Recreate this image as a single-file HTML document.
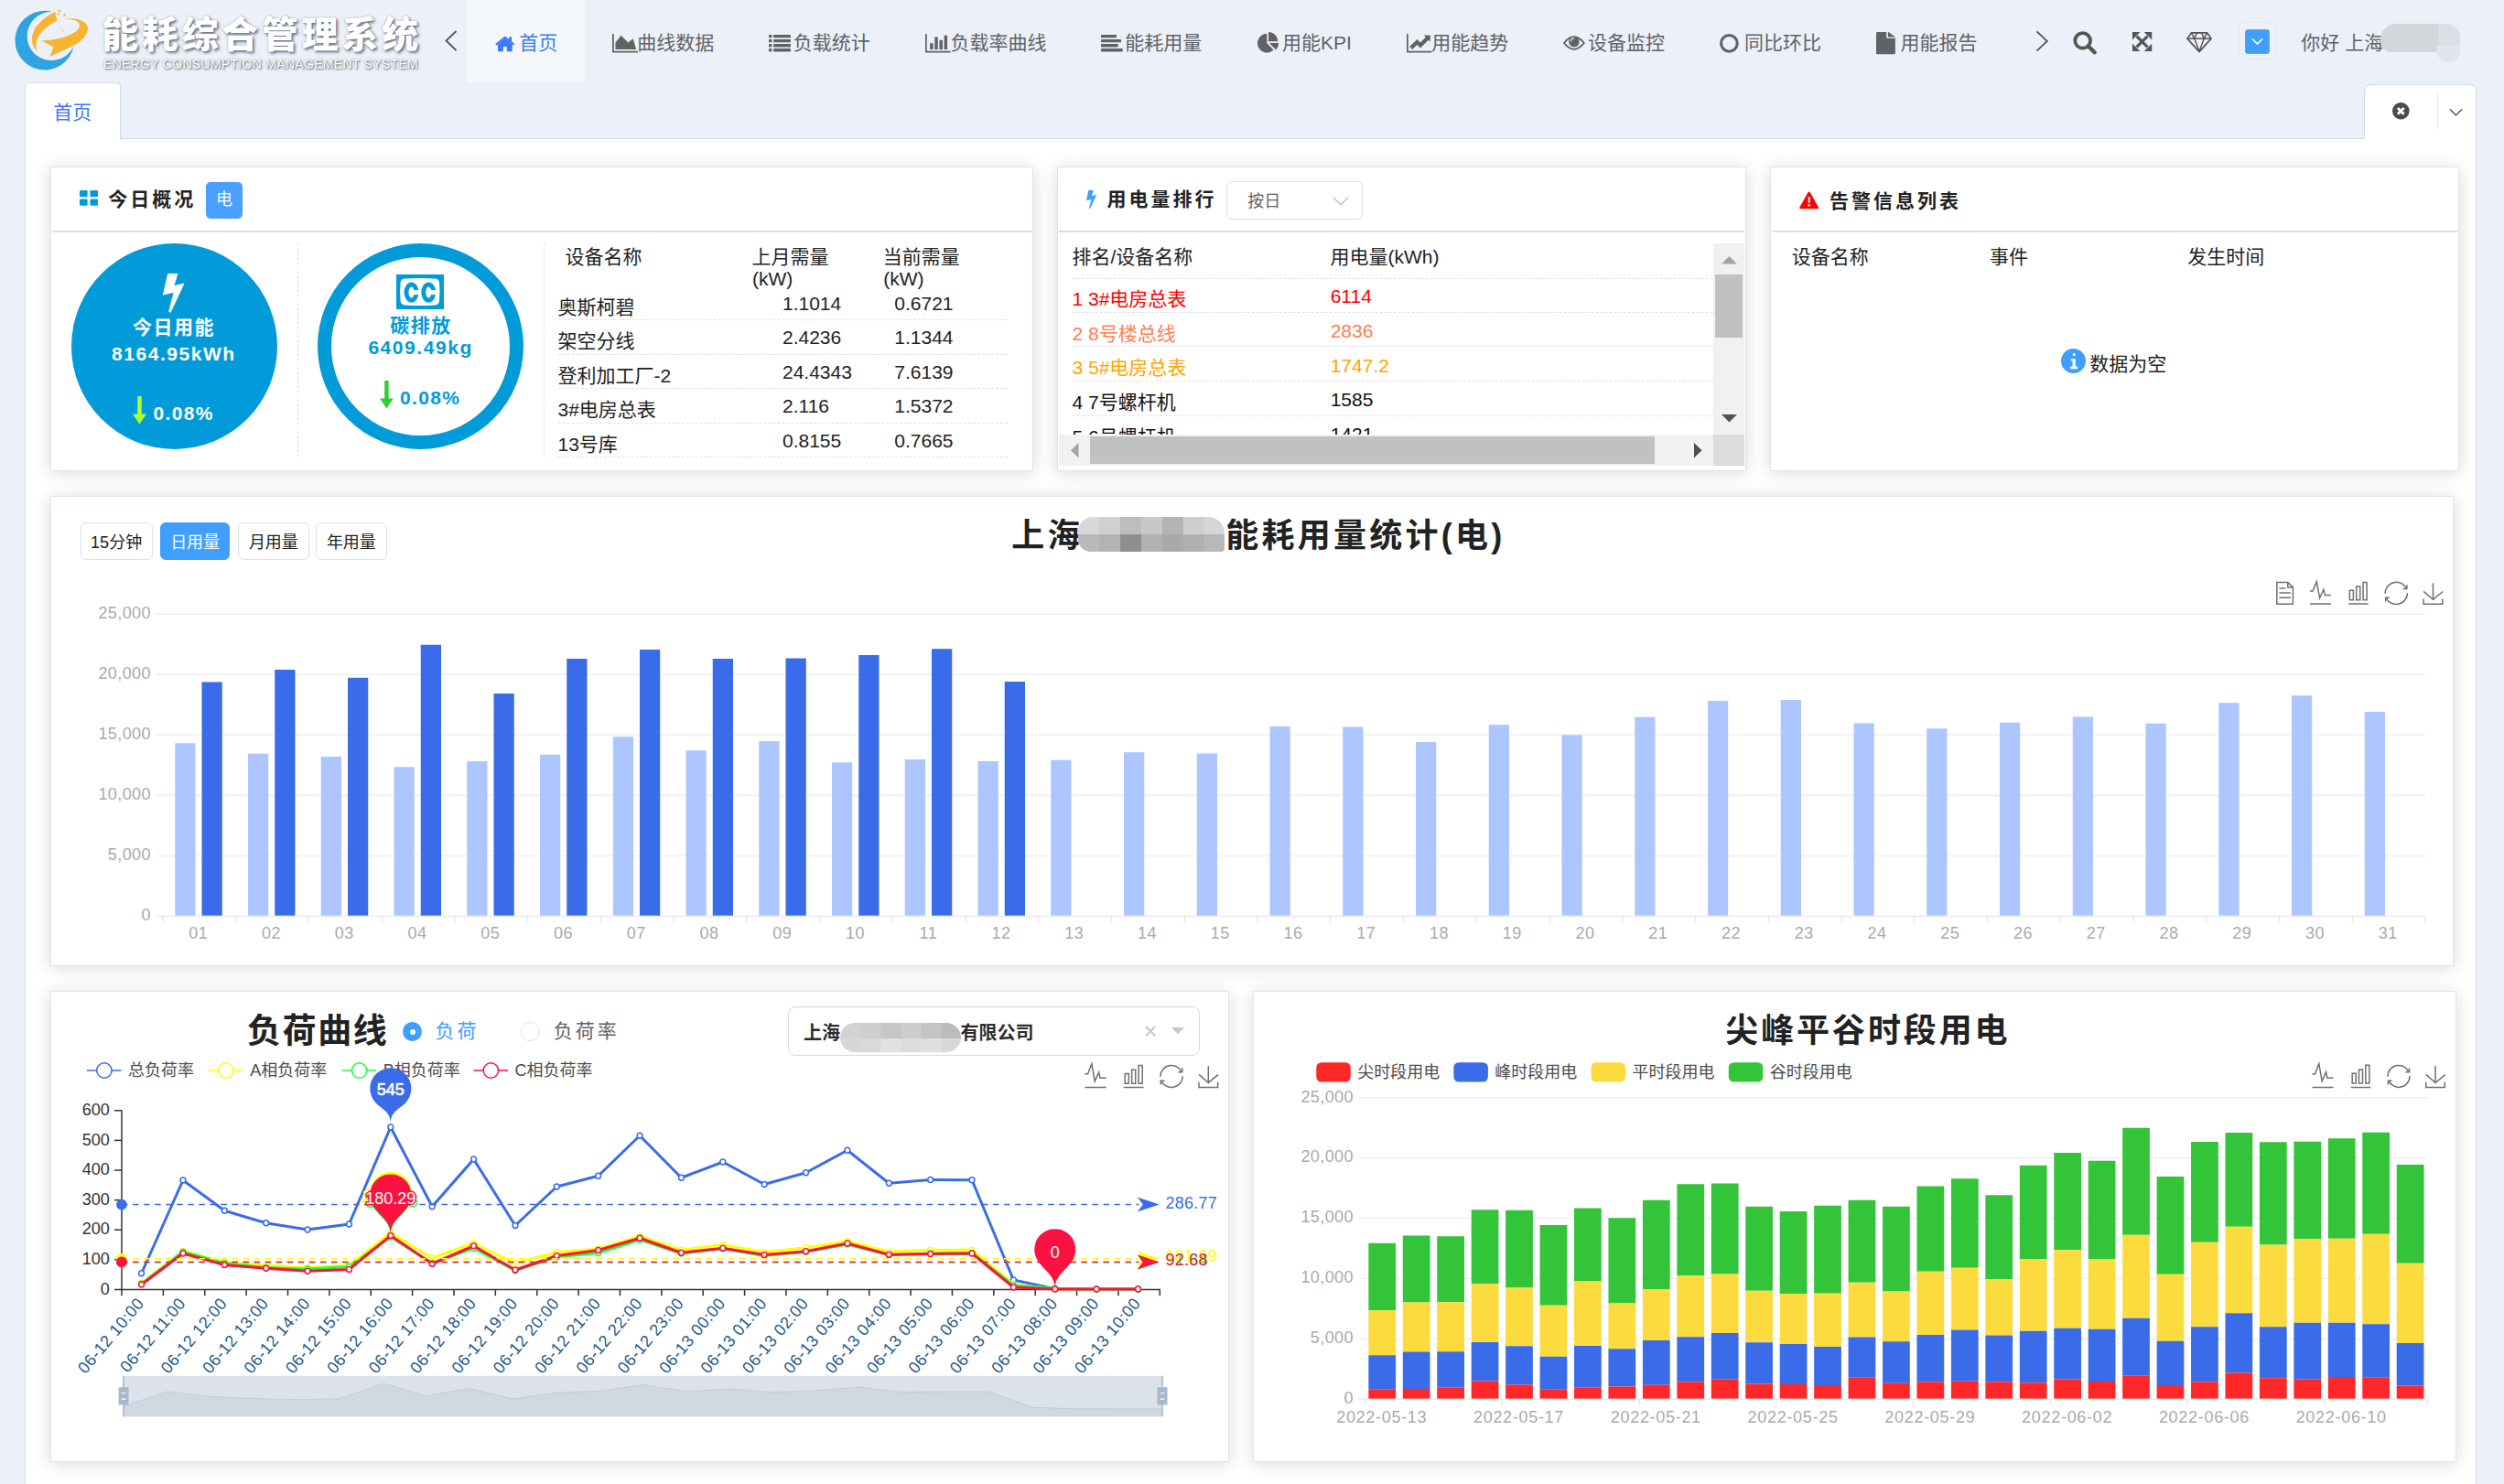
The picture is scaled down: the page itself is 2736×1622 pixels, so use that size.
<!DOCTYPE html>
<html lang="zh-CN"><head><meta charset="utf-8"><title>能耗综合管理系统</title>
<style>
*{box-sizing:border-box}
html,body{margin:0;padding:0}
body{width:2736px;height:1622px;overflow:hidden;position:relative;background:#ecf0f8;font-family:"Liberation Sans","Noto Sans CJK SC",sans-serif;color:#222;-webkit-font-smoothing:antialiased}
.abs{position:absolute}
.t{position:absolute;white-space:nowrap;line-height:1}
.panel{position:absolute;background:#fff;border:1px solid #dfe3ee;box-shadow:0 2px 18px rgba(0,0,0,.15)}
.phead{position:absolute;left:1px;right:1px;height:2px;background:#d9dfec}
.ptitle{font-weight:700;font-size:21px;letter-spacing:3px;color:#222}
.btn{position:absolute;height:41px;top:571px;border:1px solid #dcdfe6;border-radius:6px;background:#fff;font-size:18px;line-height:42px;text-align:center;color:#222}
.btn.on{background:#409eff;border-color:#409eff;color:#fff}
.row{position:absolute;border-bottom:1.5px dashed #e2e2e2}
svg{position:absolute;overflow:visible}
svg text{font-family:"Liberation Sans","Noto Sans CJK SC",sans-serif}
</style></head>
<body>
<!-- header -->
<svg style="left:8px;top:4px" width="100" height="80" viewBox="0 0 1855 1484"><path d="M900 163 A600 600 0 1 0 1345 862 A494 494 0 1 1 900 163 Z" fill="#2ea4e3"/><path d="M955 172 C 760 270 580 420 520 600 C 480 730 500 860 600 975 C 560 800 600 680 700 570 C 790 470 900 400 1015 340 Z" fill="#f8b332"/><path d="M1140 318 C 1300 280 1560 300 1630 470 C 1660 600 1500 780 1330 860 L 870 1070 L 930 880 L 690 745 C 900 760 1180 690 1340 600 C 1480 520 1500 410 1400 350 C 1320 310 1230 310 1140 318 Z" fill="#f8b332"/><circle cx="1058" cy="150" r="24" fill="#f8b332"/><circle cx="1036" cy="212" r="22" fill="#f8b332"/><circle cx="1160" cy="232" r="24" fill="#f8b332"/><circle cx="968" cy="188" r="16" fill="#f8b332"/><path d="M1075 490 L1150 580" stroke="#f8b332" stroke-width="14" stroke-linecap="round" opacity=".8"/></svg>
<div class="t " style="left:111.00px;top:14.36px;font-size:40px;line-height:48.0px;color:#fff;font-weight:900;letter-spacing:3.7px;text-shadow:2px 2px 3px rgba(70,80,100,.75),0 0 2px rgba(90,100,120,.55)">能耗综合管理系统</div>
<div class="t " style="left:113.00px;top:62.28px;font-size:14px;line-height:16.8px;color:#fff;font-weight:400;letter-spacing:0.3px;text-shadow:1px 1px 2px rgba(70,80,100,.85),0 0 2px rgba(90,100,120,.6)">ENERGY CONSUMPTION MANAGEMENT SYSTEM</div>
<svg style="left:485.00px;top:32.00px" width="16.00" height="25.00" viewBox="0 0 16 25" preserveAspectRatio="none"><path d="M13.5 2 L2.5 12.5 L13.5 23" fill="none" stroke="#555" stroke-width="1.8"/></svg>
<div class="abs" style="left:510px;top:0;width:129px;height:89.5px;background:#f4f7fb"></div>
<svg style="left:540.50px;top:38.60px" width="21.70" height="17.20" viewBox="0 0 28 22" preserveAspectRatio="none"><path d="M14 3.6 L24.2 12 V21.3 Q24.2 22 23.5 22 H16.6 V15.4 H11.4 V22 H4.5 Q3.8 22 3.8 21.3 V12 Z" fill="#3a7afe"/><path d="M0.4 11.6 L14 0.5 L19.6 5.1 V1.6 H23.4 V8.2 L27.6 11.6 L26 13.5 L14 3.7 L2 13.5 Z" fill="#3a7afe"/></svg>
<div class="t " style="left:567.20px;top:34.12px;font-size:21px;line-height:25.2px;color:#3a7afe;font-weight:400;">首页</div>
<svg style="left:668.70px;top:37.30px" width="27.90" height="20.50" viewBox="0 0 2048 1536" preserveAspectRatio="none"><path d="M0 0 H128 V1408 H2048 V1536 H0 Z" fill="#606266"/><path d="M1664 384 L1920 1280 H256 V704 L704 128 L1280 704 Z" fill="#606266"/></svg>
<div class="t " style="left:696.30px;top:34.12px;font-size:21px;line-height:25.2px;color:#606266;font-weight:400;">曲线数据</div>
<svg style="left:840.00px;top:37.60px" width="24.00" height="18.40" viewBox="0 0 1792 1408" preserveAspectRatio="none"><rect x="0" y="0" width="256" height="256" rx="32" fill="#606266"/><rect x="384" y="0" width="1408" height="256" rx="32" fill="#606266"/><rect x="0" y="384" width="256" height="256" rx="32" fill="#606266"/><rect x="384" y="384" width="1408" height="256" rx="32" fill="#606266"/><rect x="0" y="768" width="256" height="256" rx="32" fill="#606266"/><rect x="384" y="768" width="1408" height="256" rx="32" fill="#606266"/><rect x="0" y="1152" width="256" height="256" rx="32" fill="#606266"/><rect x="384" y="1152" width="1408" height="256" rx="32" fill="#606266"/></svg>
<div class="t " style="left:866.80px;top:34.12px;font-size:21px;line-height:25.2px;color:#606266;font-weight:400;">负载统计</div>
<svg style="left:1010.50px;top:37.30px" width="27.50" height="20.50" viewBox="0 0 2048 1536" preserveAspectRatio="none"><path d="M0 0 H128 V1408 H2048 V1536 H0 Z" fill="#606266"/><rect x="384" y="768" width="256" height="512" fill="#606266"/><rect x="768" y="256" width="256" height="1024" fill="#606266"/><rect x="1152" y="512" width="256" height="768" fill="#606266"/><rect x="1536" y="128" width="256" height="1152" fill="#606266"/></svg>
<div class="t " style="left:1038.50px;top:34.12px;font-size:21px;line-height:25.2px;color:#606266;font-weight:400;">负载率曲线</div>
<svg style="left:1203.00px;top:37.60px" width="23.80" height="18.40" viewBox="0 0 1792 1408" preserveAspectRatio="none"><rect x="0" y="0" width="1280" height="256" rx="64" fill="#606266"/><rect x="0" y="384" width="1664" height="256" rx="64" fill="#606266"/><rect x="0" y="768" width="1408" height="256" rx="64" fill="#606266"/><rect x="0" y="1152" width="1792" height="256" rx="64" fill="#606266"/></svg>
<div class="t " style="left:1229.20px;top:34.12px;font-size:21px;line-height:25.2px;color:#606266;font-weight:400;">能耗用量</div>
<svg style="left:1373.75px;top:34.60px" width="23.20" height="22.60" viewBox="0 0 1620 1570" preserveAspectRatio="none"><path d="M720 130 A720 720 0 1 0 1229 1360 L720 850 Z" fill="#606266"/><path d="M840 0 A720 720 0 0 1 1560 720 H840 Z" fill="#606266"/><path d="M900 840 H1620 A720 720 0 0 1 1409 1349 Z" fill="#606266"/></svg>
<div class="t " style="left:1401.00px;top:34.12px;font-size:21px;line-height:25.2px;color:#606266;font-weight:400;">用能KPI</div>
<svg style="left:1536.75px;top:37.30px" width="27.50" height="20.50" viewBox="0 0 2048 1536" preserveAspectRatio="none"><path d="M0 0 H128 V1408 H2048 V1536 H0 Z" fill="#606266"/><path d="M1920 150 V650 L1770 500 L1110 1160 L840 890 L458 1272 L236 1050 L840 446 L1110 716 L1548 278 L1398 108 H1868 Q1920 108 1920 150 Z" fill="#606266"/></svg>
<div class="t " style="left:1564.30px;top:34.12px;font-size:21px;line-height:25.2px;color:#606266;font-weight:400;">用能趋势</div>
<svg style="left:1708.00px;top:35.20px" width="23.80" height="24.00" viewBox="0 0 100 100" preserveAspectRatio="none"><path d="M4 50 Q50 -6 96 50 Q50 106 4 50 Z" fill="none" stroke="#606266" stroke-width="8" stroke-linejoin="round"/><circle cx="50" cy="44" r="24" fill="#606266"/><path d="M36 42 A14 14 0 0 1 50 28" fill="none" stroke="#ecf0f8" stroke-width="5" stroke-linecap="round"/></svg>
<div class="t " style="left:1735.00px;top:34.12px;font-size:21px;line-height:25.2px;color:#606266;font-weight:400;">设备监控</div>
<svg style="left:1878.75px;top:37.00px" width="20.80" height="20.80" viewBox="0 0 100 100" preserveAspectRatio="none"><circle cx="50" cy="50" r="42.5" fill="none" stroke="#606266" stroke-width="15"/></svg>
<div class="t " style="left:1906.00px;top:34.12px;font-size:21px;line-height:25.2px;color:#606266;font-weight:400;">同比环比</div>
<svg style="left:2050.00px;top:35.00px" width="20.90" height="24.30" viewBox="0 0 100 128" preserveAspectRatio="none"><path d="M6 0 H54 V30 Q54 36 60 36 H100 V122 Q100 128 94 128 H6 Q0 128 0 122 V6 Q0 0 6 0 Z" fill="#606266"/><path d="M62 0 Q66 1 70 5 L95 30 Q99 34 100 28 L100 28 H62 Z" fill="#606266"/><path d="M62 0 L100 28 H62 Z" fill="#606266"/></svg>
<div class="t " style="left:2076.40px;top:34.12px;font-size:21px;line-height:25.2px;color:#606266;font-weight:400;">用能报告</div>
<svg style="left:2223.00px;top:32.00px" width="16.00" height="26.00" viewBox="0 0 16 26" preserveAspectRatio="none"><path d="M2.5 2.3 L13.8 13 L2.5 23.7" fill="none" stroke="#555" stroke-width="1.8"/></svg>
<svg style="left:2265.40px;top:33.70px" width="25.40" height="24.90" viewBox="0 0 100 100" preserveAspectRatio="none"><circle cx="42" cy="42" r="33" fill="none" stroke="#555" stroke-width="15"/><path d="M66 66 L93 93" stroke="#555" stroke-width="17" stroke-linecap="round"/></svg>
<svg style="left:2329.70px;top:34.90px" width="21.20" height="21.10" viewBox="0 0 100 100" preserveAspectRatio="none"><path d="M22 22 L78 78 M78 22 L22 78" stroke="#555" stroke-width="15"/><path d="M0 0 H40 L0 40 Z M100 0 V40 L60 0 Z M0 100 V60 L40 100 Z M100 100 H60 L100 60 Z" fill="#555"/></svg>
<svg style="left:2388.90px;top:34.60px" width="28.00" height="22.50" viewBox="0 0 128 100" preserveAspectRatio="none"><path d="M24 4 H104 L124 32 L64 96 L4 32 Z" fill="none" stroke="#555" stroke-width="7.5" stroke-linejoin="round"/><path d="M4 32 H124 M40 32 L64 94 L88 32 M24 4 L40 32 L52 4 M76 4 L88 32 L104 4 M52 4 L64 4" fill="none" stroke="#555" stroke-width="6.5" stroke-linejoin="round"/></svg>
<div class="abs" style="left:2445.5px;top:24.3px;width:41.2px;height:41px;border:1px solid #e3e7ef;border-radius:6px;background:#eef1f8"></div>
<div class="abs" style="left:2453px;top:32px;width:27px;height:27px;background:#409eff;border:1px solid #8a9bb5;border-radius:3px"></div>
<svg style="left:2459.00px;top:41.00px" width="15.00" height="9.00" viewBox="0 0 15 9" preserveAspectRatio="none"><path d="M2 1.5 L7.5 7 L13 1.5" fill="none" stroke="#fff" stroke-width="1.6"/></svg>
<div class="t " style="left:2514.30px;top:34.12px;font-size:21px;line-height:25.2px;color:#606266;font-weight:400;">你好 上海</div>
<div class="abs" style="left:2600.5px;top:25.7px;width:87.2px;height:31.8px;border-radius:17px 15px 0 12px;background:linear-gradient(90deg,#d3d6da 0%,#d3d6da 72%,#dcdfe5 73%,#dcdfe5 100%)"></div>
<div class="abs" style="left:2662px;top:50px;width:25.7px;height:18px;border-radius:0 0 13px 15px;background:#e1e4ea"></div>
<!-- tabs + content -->
<div class="abs" style="left:27px;top:151px;width:2679px;height:1480px;background:#fff;border:1px solid #d3dae8;border-bottom:none"></div>
<div class="abs" style="left:27px;top:90px;width:104.5px;height:62.5px;background:#fff;border:1px solid #d3dae8;border-bottom:none;border-radius:5px 5px 0 0"></div>
<div class="t " style="left:58.20px;top:110.02px;font-size:21px;line-height:25.2px;color:#3f79fb;font-weight:400;">首页</div>
<div class="abs" style="left:2583px;top:92px;width:123px;height:59.5px;background:#fff;border:1px solid #d3dae8;border-bottom:none;border-radius:7px 7px 0 0"></div>
<svg style="left:2614.20px;top:112.30px" width="18.60" height="18.60" viewBox="0 0 100 100" preserveAspectRatio="none"><circle cx="50" cy="50" r="50" fill="#4a4a4a"/><path d="M32 32 L68 68 M68 32 L32 68" stroke="#fff" stroke-width="15"/></svg>
<div class="abs" style="left:2663px;top:101px;width:1px;height:41.5px;background:#e4e7ed"></div>
<svg style="left:2676.00px;top:117.50px" width="15.00" height="10.00" viewBox="0 0 15 10" preserveAspectRatio="none"><path d="M1 1.5 L7.5 8 L14 1.5" fill="none" stroke="#555" stroke-width="1.4"/></svg>
<!-- row 1 -->
<div class="panel" style="left:55px;top:182px;width:1074px;height:333px"></div>
<div class="abs" style="left:57px;top:251.5px;width:1070px;height:2px;background:#d9dfec"></div>
<svg style="left:86.50px;top:208.20px" width="20.00" height="16.80" viewBox="0 0 20 16.8" preserveAspectRatio="none"><rect x="0" y="0" width="8.6" height="7.2" rx="1.3" fill="#029bd9"/><rect x="0" y="9.6" width="8.6" height="7.2" rx="1.3" fill="#029bd9"/><rect x="11.4" y="0" width="8.6" height="7.2" rx="1.3" fill="#029bd9"/><rect x="11.4" y="9.6" width="8.6" height="7.2" rx="1.3" fill="#029bd9"/></svg>
<div class="t " style="left:118.30px;top:205.42px;font-size:21px;line-height:25.2px;color:#222;font-weight:700;letter-spacing:3px">今日概况</div>
<div class="abs" style="left:225px;top:199px;width:40px;height:40px;background:#4a9fff;border-radius:5px"></div>
<div class="t " style="left:236.00px;top:208.25px;font-size:18px;line-height:21.6px;color:#fff;font-weight:400;">电</div>
<div class="abs" style="left:78px;top:265.75px;width:225px;height:225px;border-radius:50%;background:#029bd9"></div>
<svg style="left:178.30px;top:299.20px" width="23.30" height="42.70" viewBox="0 0 288 528" preserveAspectRatio="none"><path d="M68 3 L198 3 L148 168 L285 135 L103 525 L81 513 L148 253 L3 288 Z" fill="#fff" stroke="#fff" stroke-width="8" stroke-linejoin="round"/></svg>
<div class="t " style="left:145.00px;top:345.12px;font-size:21px;line-height:25.2px;color:#fff;font-weight:700;letter-spacing:1.5px">今日用能</div>
<div class="t " style="left:122.00px;top:374.32px;font-size:21px;line-height:25.2px;color:#fff;font-weight:700;letter-spacing:1.55px">8164.95kWh</div>
<svg style="left:145.00px;top:432.50px" width="15.00" height="30.50" viewBox="0 0 60 122" preserveAspectRatio="none"><path d="M21 0 H39 V78 H60 L30 122 L0 78 H21 Z" fill="#adff2f"/></svg>
<div class="t " style="left:167.50px;top:439.12px;font-size:21px;line-height:25.2px;color:#fff;font-weight:700;letter-spacing:1.35px">0.08%</div>
<div class="abs" style="left:325px;top:266px;width:0;height:233px;border-left:1.5px dashed #e0e0e0"></div>
<div class="abs" style="left:594px;top:266px;width:0;height:233px;border-left:1.5px dashed #e0e0e0"></div>
<div class="abs" style="left:347px;top:265.75px;width:225px;height:225px;border-radius:50%;border:15px solid #029bd9;background:#fff"></div>
<div class="abs" style="left:433.3px;top:299.7px;width:51.6px;height:38.2px;background:#029bd9"></div>
<svg style="left:433.30px;top:299.70px" width="51.60" height="38.20" viewBox="0 0 51.6 38.2" preserveAspectRatio="none"><path d="M9 4.6 Q25.8 3.2 42.6 4.6 Q46.6 5 47 9 Q48 19 47 29 Q46.6 33 42.6 33.4 Q25.8 34.8 9 33.4 Q5 33 4.6 29 Q3.6 19 4.6 9 Q5 5 9 4.6 Z" fill="#fff"/><ellipse cx="16.55" cy="19.6" rx="5.55" ry="8.6" fill="none" stroke="#029bd9" stroke-width="4.9"/><rect x="18.05" y="17.1" width="8" height="5" fill="#fff"/><ellipse cx="35.30" cy="19.6" rx="5.55" ry="8.6" fill="none" stroke="#029bd9" stroke-width="4.9"/><rect x="36.80" y="17.1" width="8" height="5" fill="#fff"/></svg>
<div class="t " style="left:426.30px;top:343.42px;font-size:21px;line-height:25.2px;color:#029bd9;font-weight:700;letter-spacing:1.5px">碳排放</div>
<div class="t " style="left:402.40px;top:366.72px;font-size:21px;line-height:25.2px;color:#029bd9;font-weight:700;letter-spacing:1.55px">6409.49kg</div>
<svg style="left:414.50px;top:415.75px" width="14.80" height="30.50" viewBox="0 0 60 122" preserveAspectRatio="none"><path d="M21 0 H39 V78 H60 L30 122 L0 78 H21 Z" fill="#32cd32"/></svg>
<div class="t " style="left:437.00px;top:422.12px;font-size:21px;line-height:25.2px;color:#029bd9;font-weight:700;letter-spacing:1.35px">0.08%</div>
<div class="t " style="left:617.50px;top:268.42px;font-size:21px;line-height:25.2px;color:#222;font-weight:400;">设备名称</div>
<div class="t " style="left:821.50px;top:268.42px;font-size:21px;line-height:25.2px;color:#222;font-weight:400;">上月需量</div>
<div class="t " style="left:822.00px;top:292.12px;font-size:21px;line-height:25.2px;color:#222;font-weight:400;">(kW)</div>
<div class="t " style="left:964.80px;top:268.42px;font-size:21px;line-height:25.2px;color:#222;font-weight:400;">当前需量</div>
<div class="t " style="left:965.30px;top:292.12px;font-size:21px;line-height:25.2px;color:#222;font-weight:400;">(kW)</div>
<div class="abs" style="left:610px;top:349.25px;width:491px;height:0;border-top:1.5px dashed #e0e0e0"></div>
<div class="t " style="left:609.50px;top:322.52px;font-size:21px;line-height:25.2px;color:#222;font-weight:400;">奥斯柯碧</div>
<div class="t " style="left:855.00px;top:318.82px;font-size:21px;line-height:25.2px;color:#222;font-weight:400;">1.1014</div>
<div class="t " style="left:977.30px;top:318.82px;font-size:21px;line-height:25.2px;color:#222;font-weight:400;">0.6721</div>
<div class="abs" style="left:610px;top:386.75px;width:491px;height:0;border-top:1.5px dashed #e0e0e0"></div>
<div class="t " style="left:609.50px;top:360.02px;font-size:21px;line-height:25.2px;color:#222;font-weight:400;">架空分线</div>
<div class="t " style="left:855.00px;top:356.32px;font-size:21px;line-height:25.2px;color:#222;font-weight:400;">2.4236</div>
<div class="t " style="left:977.30px;top:356.32px;font-size:21px;line-height:25.2px;color:#222;font-weight:400;">1.1344</div>
<div class="abs" style="left:610px;top:424.25px;width:491px;height:0;border-top:1.5px dashed #e0e0e0"></div>
<div class="t " style="left:609.50px;top:397.52px;font-size:21px;line-height:25.2px;color:#222;font-weight:400;">登利加工厂-2</div>
<div class="t " style="left:855.00px;top:393.82px;font-size:21px;line-height:25.2px;color:#222;font-weight:400;">24.4343</div>
<div class="t " style="left:977.30px;top:393.82px;font-size:21px;line-height:25.2px;color:#222;font-weight:400;">7.6139</div>
<div class="abs" style="left:610px;top:461.75px;width:491px;height:0;border-top:1.5px dashed #e0e0e0"></div>
<div class="t " style="left:609.50px;top:435.02px;font-size:21px;line-height:25.2px;color:#222;font-weight:400;">3#电房总表</div>
<div class="t " style="left:855.00px;top:431.32px;font-size:21px;line-height:25.2px;color:#222;font-weight:400;">2.116</div>
<div class="t " style="left:977.30px;top:431.32px;font-size:21px;line-height:25.2px;color:#222;font-weight:400;">1.5372</div>
<div class="abs" style="left:610px;top:499.25px;width:491px;height:0;border-top:1.5px dashed #e0e0e0"></div>
<div class="t " style="left:609.50px;top:472.52px;font-size:21px;line-height:25.2px;color:#222;font-weight:400;">13号库</div>
<div class="t " style="left:855.00px;top:468.82px;font-size:21px;line-height:25.2px;color:#222;font-weight:400;">0.8155</div>
<div class="t " style="left:977.30px;top:468.82px;font-size:21px;line-height:25.2px;color:#222;font-weight:400;">0.7665</div>
<div class="panel" style="left:1155px;top:182px;width:753px;height:333px"></div>
<div class="abs" style="left:1157px;top:251.5px;width:749px;height:2px;background:#d9dfec"></div>
<svg style="left:1186.70px;top:207.90px" width="11.00" height="20.20" viewBox="0 0 288 528" preserveAspectRatio="none"><path d="M68 3 L198 3 L148 168 L285 135 L103 525 L81 513 L148 253 L3 288 Z" fill="#409eff" stroke="#409eff" stroke-width="10" stroke-linejoin="round"/></svg>
<div class="t " style="left:1209.50px;top:204.92px;font-size:21px;line-height:25.2px;color:#222;font-weight:700;letter-spacing:3px">用电量排行</div>
<div class="abs" style="left:1339.5px;top:198.25px;width:149.5px;height:41.5px;border:1px solid #dcdfe6;border-radius:6px;background:#fff"></div>
<div class="t " style="left:1363.30px;top:209.75px;font-size:18px;line-height:21.6px;color:#606266;font-weight:400;">按日</div>
<svg style="left:1455.50px;top:214.50px" width="18.00" height="10.00" viewBox="0 0 18 10" preserveAspectRatio="none"><path d="M1 1 L9 8.8 L17 1" fill="none" stroke="#c0c4cc" stroke-width="1.6"/></svg>
<div class="t " style="left:1171.50px;top:268.22px;font-size:21px;line-height:25.2px;color:#222;font-weight:400;">排名/设备名称</div>
<div class="t " style="left:1453.50px;top:268.22px;font-size:21px;line-height:25.2px;color:#222;font-weight:400;">用电量(kWh)</div>
<div class="abs" style="left:1157px;top:265px;width:715px;height:210px;overflow:hidden"><div class="abs" style="left:15px;top:38.75px;width:700px;height:0;border-top:1.5px dashed #e0e0e0"></div><div class="abs" style="left:15px;top:75.75px;width:700px;height:0;border-top:1.5px dashed #e0e0e0"></div><div class="t " style="left:14.50px;top:49.22px;font-size:21px;line-height:25.2px;color:#ff0000;font-weight:400;">1 3#电房总表</div><div class="t " style="left:296.70px;top:46.32px;font-size:21px;line-height:25.2px;color:#ff0000;font-weight:400;">6114</div><div class="abs" style="left:15px;top:113.35000000000002px;width:700px;height:0;border-top:1.5px dashed #e0e0e0"></div><div class="t " style="left:14.50px;top:86.82px;font-size:21px;line-height:25.2px;color:#ff7f50;font-weight:400;">2 8号楼总线</div><div class="t " style="left:296.70px;top:83.92px;font-size:21px;line-height:25.2px;color:#ff7f50;font-weight:400;">2836</div><div class="abs" style="left:15px;top:150.95px;width:700px;height:0;border-top:1.5px dashed #e0e0e0"></div><div class="t " style="left:14.50px;top:124.42px;font-size:21px;line-height:25.2px;color:#ffa500;font-weight:400;">3 5#电房总表</div><div class="t " style="left:296.70px;top:121.52px;font-size:21px;line-height:25.2px;color:#ffa500;font-weight:400;">1747.2</div><div class="abs" style="left:15px;top:188.55px;width:700px;height:0;border-top:1.5px dashed #e0e0e0"></div><div class="t " style="left:14.50px;top:162.02px;font-size:21px;line-height:25.2px;color:#111;font-weight:400;">4 7号螺杆机</div><div class="t " style="left:296.70px;top:159.12px;font-size:21px;line-height:25.2px;color:#111;font-weight:400;">1585</div><div class="abs" style="left:15px;top:226.14999999999998px;width:700px;height:0;border-top:1.5px dashed #e0e0e0"></div><div class="t " style="left:14.50px;top:199.62px;font-size:21px;line-height:25.2px;color:#111;font-weight:400;">5 6号螺杆机</div><div class="t " style="left:296.70px;top:196.72px;font-size:21px;line-height:25.2px;color:#111;font-weight:400;">1421</div></div>
<div class="abs" style="left:1872px;top:265.75px;width:34px;height:209.5px;background:#f1f1f1"></div>
<div class="abs" style="left:1874.3px;top:300px;width:29.5px;height:68.8px;background:#c1c1c1"></div>
<svg style="left:1880.70px;top:279.50px" width="17.00" height="8.60" viewBox="0 0 17 8.6" preserveAspectRatio="none"><path d="M0 8.6 L8.5 0 L17 8.6 Z" fill="#a3a3a3"/></svg>
<svg style="left:1880.70px;top:453.00px" width="17.00" height="8.40" viewBox="0 0 17 8.4" preserveAspectRatio="none"><path d="M0 0 L8.5 8.4 L17 0 Z" fill="#505050"/></svg>
<div class="abs" style="left:1157px;top:475px;width:715px;height:34px;background:#f1f1f1"></div>
<div class="abs" style="left:1191.2px;top:477.2px;width:617px;height:29.5px;background:#c1c1c1"></div>
<svg style="left:1169.50px;top:483.70px" width="8.50" height="16.50" viewBox="0 0 8.5 16.5" preserveAspectRatio="none"><path d="M8.5 0 L0 8.25 L8.5 16.5 Z" fill="#a3a3a3"/></svg>
<svg style="left:1851.20px;top:483.70px" width="8.50" height="16.50" viewBox="0 0 8.5 16.5" preserveAspectRatio="none"><path d="M0 0 L8.5 8.25 L0 16.5 Z" fill="#505050"/></svg>
<div class="abs" style="left:1872px;top:475px;width:34px;height:34px;background:#dcdcdc"></div>
<div class="panel" style="left:1934px;top:182px;width:753px;height:333px"></div>
<div class="abs" style="left:1936px;top:251.5px;width:749px;height:2px;background:#d9dfec"></div>
<svg style="left:1965.70px;top:209.20px" width="21.40" height="19.60" viewBox="0 0 214 196" preserveAspectRatio="none"><path d="M107 4 Q113 4 117 11 L211 178 Q216 190 204 192 H10 Q-2 190 3 178 L97 11 Q101 4 107 4 Z" fill="#ff0000"/><path d="M95 62 H119 L116 128 H98 Z M96 142 H118 V164 H96 Z" fill="#fff"/></svg>
<div class="t " style="left:1999.00px;top:207.42px;font-size:21px;line-height:25.2px;color:#222;font-weight:700;letter-spacing:3px">告警信息列表</div>
<div class="t " style="left:1957.80px;top:268.42px;font-size:21px;line-height:25.2px;color:#222;font-weight:400;">设备名称</div>
<div class="t " style="left:2174.00px;top:268.42px;font-size:21px;line-height:25.2px;color:#222;font-weight:400;">事件</div>
<div class="t " style="left:2390.30px;top:268.42px;font-size:21px;line-height:25.2px;color:#222;font-weight:400;">发生时间</div>
<div class="abs" style="left:2251.75px;top:380.75px;width:27px;height:27px;border-radius:50%;background:#409eff"></div>
<svg style="left:2260.50px;top:385.50px" width="10.00" height="17.50" viewBox="0 0 100 175" preserveAspectRatio="none"><circle cx="52" cy="16" r="15" fill="#fff"/><path d="M18 62 H68 V148 H92 V172 H10 V148 H36 V86 H18 Z" fill="#fff"/></svg>
<div class="t " style="left:2283.30px;top:384.52px;font-size:21px;line-height:25.2px;color:#222;font-weight:400;">数据为空</div>
<!-- chart 1 -->
<div class="panel" style="left:55px;top:542px;width:2626px;height:514px"></div>
<div class="btn" style="left:87.5px;width:79.25px;top:571.25px">15分钟</div>
<div class="btn on" style="left:175px;width:76.25px;top:571.25px">日用量</div>
<div class="btn" style="left:260.25px;width:77.25px;top:571.25px">月用量</div>
<div class="btn" style="left:345.25px;width:77.25px;top:571.25px">年用量</div>
<div class="t " style="left:1105.30px;top:564.29px;font-size:36px;line-height:43.2px;color:#222;font-weight:700;letter-spacing:3.25px">上海</div>
<div class="t " style="left:1339.30px;top:564.29px;font-size:36px;line-height:43.2px;color:#222;font-weight:700;letter-spacing:3.25px">能耗用量统计(电)</div>
<div class="abs" style="left:1177.5px;top:565px;width:160px;height:37.5px;border-radius:16px 18px 4px 14px;overflow:hidden"><svg style="left:0;top:0" width="160" height="38"><rect x="0" y="0" width="23.5" height="19.5" fill="#d8d8d8"/><rect x="23" y="0" width="23.5" height="19.5" fill="#d0d0d0"/><rect x="46" y="0" width="23.5" height="19.5" fill="#bdbdbd"/><rect x="69" y="0" width="23.5" height="19.5" fill="#c8c8c8"/><rect x="92" y="0" width="23.5" height="19.5" fill="#b4b4b4"/><rect x="115" y="0" width="23.5" height="19.5" fill="#cfcfcf"/><rect x="138" y="0" width="23.5" height="19.5" fill="#d6d6d6"/><rect x="0" y="19" width="23.5" height="19.5" fill="#b9b9b9"/><rect x="23" y="19" width="23.5" height="19.5" fill="#b3b3b3"/><rect x="46" y="19" width="23.5" height="19.5" fill="#8f8f8f"/><rect x="69" y="19" width="23.5" height="19.5" fill="#b2b2b2"/><rect x="92" y="19" width="23.5" height="19.5" fill="#a9a9a9"/><rect x="115" y="19" width="23.5" height="19.5" fill="#b0b0b0"/><rect x="138" y="19" width="23.5" height="19.5" fill="#b8b8b8"/></svg></div>
<svg style="left:0;top:0" width="2736" height="1622" viewBox="0 0 2736 1622"><line x1="170" x2="2650" y1="1001.50" y2="1001.50" stroke="#e9e9ee" stroke-width="1.6"/><text x="164.9" y="1006.40" font-size="18" letter-spacing="0.4" fill="#aaa" text-anchor="end">0</text><line x1="170" x2="2650" y1="935.44" y2="935.44" stroke="#f0f0f3" stroke-width="1.6"/><text x="164.9" y="940.34" font-size="18" letter-spacing="0.4" fill="#aaa" text-anchor="end">5,000</text><line x1="170" x2="2650" y1="869.38" y2="869.38" stroke="#f0f0f3" stroke-width="1.6"/><text x="164.9" y="874.28" font-size="18" letter-spacing="0.4" fill="#aaa" text-anchor="end">10,000</text><line x1="170" x2="2650" y1="803.32" y2="803.32" stroke="#f0f0f3" stroke-width="1.6"/><text x="164.9" y="808.22" font-size="18" letter-spacing="0.4" fill="#aaa" text-anchor="end">15,000</text><line x1="170" x2="2650" y1="737.26" y2="737.26" stroke="#f0f0f3" stroke-width="1.6"/><text x="164.9" y="742.16" font-size="18" letter-spacing="0.4" fill="#aaa" text-anchor="end">20,000</text><line x1="170" x2="2650" y1="671.20" y2="671.20" stroke="#f0f0f3" stroke-width="1.6"/><text x="164.9" y="676.10" font-size="18" letter-spacing="0.4" fill="#aaa" text-anchor="end">25,000</text><line x1="177.75" x2="177.75" y1="1001.5" y2="1008.3" stroke="#e9e9ee" stroke-width="1.6"/><line x1="257.50" x2="257.50" y1="1001.5" y2="1008.3" stroke="#e9e9ee" stroke-width="1.6"/><line x1="337.25" x2="337.25" y1="1001.5" y2="1008.3" stroke="#e9e9ee" stroke-width="1.6"/><line x1="417.00" x2="417.00" y1="1001.5" y2="1008.3" stroke="#e9e9ee" stroke-width="1.6"/><line x1="496.75" x2="496.75" y1="1001.5" y2="1008.3" stroke="#e9e9ee" stroke-width="1.6"/><line x1="576.50" x2="576.50" y1="1001.5" y2="1008.3" stroke="#e9e9ee" stroke-width="1.6"/><line x1="656.25" x2="656.25" y1="1001.5" y2="1008.3" stroke="#e9e9ee" stroke-width="1.6"/><line x1="736.00" x2="736.00" y1="1001.5" y2="1008.3" stroke="#e9e9ee" stroke-width="1.6"/><line x1="815.75" x2="815.75" y1="1001.5" y2="1008.3" stroke="#e9e9ee" stroke-width="1.6"/><line x1="895.50" x2="895.50" y1="1001.5" y2="1008.3" stroke="#e9e9ee" stroke-width="1.6"/><line x1="975.25" x2="975.25" y1="1001.5" y2="1008.3" stroke="#e9e9ee" stroke-width="1.6"/><line x1="1055.00" x2="1055.00" y1="1001.5" y2="1008.3" stroke="#e9e9ee" stroke-width="1.6"/><line x1="1134.75" x2="1134.75" y1="1001.5" y2="1008.3" stroke="#e9e9ee" stroke-width="1.6"/><line x1="1214.50" x2="1214.50" y1="1001.5" y2="1008.3" stroke="#e9e9ee" stroke-width="1.6"/><line x1="1294.25" x2="1294.25" y1="1001.5" y2="1008.3" stroke="#e9e9ee" stroke-width="1.6"/><line x1="1374.00" x2="1374.00" y1="1001.5" y2="1008.3" stroke="#e9e9ee" stroke-width="1.6"/><line x1="1453.75" x2="1453.75" y1="1001.5" y2="1008.3" stroke="#e9e9ee" stroke-width="1.6"/><line x1="1533.50" x2="1533.50" y1="1001.5" y2="1008.3" stroke="#e9e9ee" stroke-width="1.6"/><line x1="1613.25" x2="1613.25" y1="1001.5" y2="1008.3" stroke="#e9e9ee" stroke-width="1.6"/><line x1="1693.00" x2="1693.00" y1="1001.5" y2="1008.3" stroke="#e9e9ee" stroke-width="1.6"/><line x1="1772.75" x2="1772.75" y1="1001.5" y2="1008.3" stroke="#e9e9ee" stroke-width="1.6"/><line x1="1852.50" x2="1852.50" y1="1001.5" y2="1008.3" stroke="#e9e9ee" stroke-width="1.6"/><line x1="1932.25" x2="1932.25" y1="1001.5" y2="1008.3" stroke="#e9e9ee" stroke-width="1.6"/><line x1="2012.00" x2="2012.00" y1="1001.5" y2="1008.3" stroke="#e9e9ee" stroke-width="1.6"/><line x1="2091.75" x2="2091.75" y1="1001.5" y2="1008.3" stroke="#e9e9ee" stroke-width="1.6"/><line x1="2171.50" x2="2171.50" y1="1001.5" y2="1008.3" stroke="#e9e9ee" stroke-width="1.6"/><line x1="2251.25" x2="2251.25" y1="1001.5" y2="1008.3" stroke="#e9e9ee" stroke-width="1.6"/><line x1="2331.00" x2="2331.00" y1="1001.5" y2="1008.3" stroke="#e9e9ee" stroke-width="1.6"/><line x1="2410.75" x2="2410.75" y1="1001.5" y2="1008.3" stroke="#e9e9ee" stroke-width="1.6"/><line x1="2490.50" x2="2490.50" y1="1001.5" y2="1008.3" stroke="#e9e9ee" stroke-width="1.6"/><line x1="2570.25" x2="2570.25" y1="1001.5" y2="1008.3" stroke="#e9e9ee" stroke-width="1.6"/><line x1="2650.00" x2="2650.00" y1="1001.5" y2="1008.3" stroke="#e9e9ee" stroke-width="1.6"/><text x="216.82" y="1026.3" font-size="18" letter-spacing="0.5" fill="#aaa" text-anchor="middle">01</text><text x="296.57" y="1026.3" font-size="18" letter-spacing="0.5" fill="#aaa" text-anchor="middle">02</text><text x="376.32" y="1026.3" font-size="18" letter-spacing="0.5" fill="#aaa" text-anchor="middle">03</text><text x="456.07" y="1026.3" font-size="18" letter-spacing="0.5" fill="#aaa" text-anchor="middle">04</text><text x="535.83" y="1026.3" font-size="18" letter-spacing="0.5" fill="#aaa" text-anchor="middle">05</text><text x="615.58" y="1026.3" font-size="18" letter-spacing="0.5" fill="#aaa" text-anchor="middle">06</text><text x="695.33" y="1026.3" font-size="18" letter-spacing="0.5" fill="#aaa" text-anchor="middle">07</text><text x="775.08" y="1026.3" font-size="18" letter-spacing="0.5" fill="#aaa" text-anchor="middle">08</text><text x="854.83" y="1026.3" font-size="18" letter-spacing="0.5" fill="#aaa" text-anchor="middle">09</text><text x="934.58" y="1026.3" font-size="18" letter-spacing="0.5" fill="#aaa" text-anchor="middle">10</text><text x="1014.33" y="1026.3" font-size="18" letter-spacing="0.5" fill="#aaa" text-anchor="middle">11</text><text x="1094.08" y="1026.3" font-size="18" letter-spacing="0.5" fill="#aaa" text-anchor="middle">12</text><text x="1173.83" y="1026.3" font-size="18" letter-spacing="0.5" fill="#aaa" text-anchor="middle">13</text><text x="1253.58" y="1026.3" font-size="18" letter-spacing="0.5" fill="#aaa" text-anchor="middle">14</text><text x="1333.33" y="1026.3" font-size="18" letter-spacing="0.5" fill="#aaa" text-anchor="middle">15</text><text x="1413.08" y="1026.3" font-size="18" letter-spacing="0.5" fill="#aaa" text-anchor="middle">16</text><text x="1492.83" y="1026.3" font-size="18" letter-spacing="0.5" fill="#aaa" text-anchor="middle">17</text><text x="1572.58" y="1026.3" font-size="18" letter-spacing="0.5" fill="#aaa" text-anchor="middle">18</text><text x="1652.33" y="1026.3" font-size="18" letter-spacing="0.5" fill="#aaa" text-anchor="middle">19</text><text x="1732.08" y="1026.3" font-size="18" letter-spacing="0.5" fill="#aaa" text-anchor="middle">20</text><text x="1811.83" y="1026.3" font-size="18" letter-spacing="0.5" fill="#aaa" text-anchor="middle">21</text><text x="1891.58" y="1026.3" font-size="18" letter-spacing="0.5" fill="#aaa" text-anchor="middle">22</text><text x="1971.33" y="1026.3" font-size="18" letter-spacing="0.5" fill="#aaa" text-anchor="middle">23</text><text x="2051.07" y="1026.3" font-size="18" letter-spacing="0.5" fill="#aaa" text-anchor="middle">24</text><text x="2130.82" y="1026.3" font-size="18" letter-spacing="0.5" fill="#aaa" text-anchor="middle">25</text><text x="2210.57" y="1026.3" font-size="18" letter-spacing="0.5" fill="#aaa" text-anchor="middle">26</text><text x="2290.32" y="1026.3" font-size="18" letter-spacing="0.5" fill="#aaa" text-anchor="middle">27</text><text x="2370.07" y="1026.3" font-size="18" letter-spacing="0.5" fill="#aaa" text-anchor="middle">28</text><text x="2449.82" y="1026.3" font-size="18" letter-spacing="0.5" fill="#aaa" text-anchor="middle">29</text><text x="2529.57" y="1026.3" font-size="18" letter-spacing="0.5" fill="#aaa" text-anchor="middle">30</text><text x="2609.32" y="1026.3" font-size="18" letter-spacing="0.5" fill="#aaa" text-anchor="middle">31</text><rect x="191.25" y="812.25" width="22.25" height="188.45" fill="#adc6ff"/><rect x="271.00" y="823.75" width="22.25" height="176.95" fill="#adc6ff"/><rect x="350.75" y="827.00" width="22.25" height="173.70" fill="#adc6ff"/><rect x="430.50" y="838.25" width="22.25" height="162.45" fill="#adc6ff"/><rect x="510.25" y="832.00" width="22.25" height="168.70" fill="#adc6ff"/><rect x="590.00" y="824.75" width="22.25" height="175.95" fill="#adc6ff"/><rect x="669.75" y="805.25" width="22.25" height="195.45" fill="#adc6ff"/><rect x="749.50" y="820.25" width="22.25" height="180.45" fill="#adc6ff"/><rect x="829.25" y="810.00" width="22.25" height="190.70" fill="#adc6ff"/><rect x="909.00" y="833.25" width="22.25" height="167.45" fill="#adc6ff"/><rect x="988.75" y="830.00" width="22.25" height="170.70" fill="#adc6ff"/><rect x="1068.50" y="832.00" width="22.25" height="168.70" fill="#adc6ff"/><rect x="1148.25" y="830.75" width="22.25" height="169.95" fill="#adc6ff"/><rect x="1228.00" y="822.25" width="22.25" height="178.45" fill="#adc6ff"/><rect x="1307.75" y="823.50" width="22.25" height="177.20" fill="#adc6ff"/><rect x="1387.50" y="794.00" width="22.25" height="206.70" fill="#adc6ff"/><rect x="1467.25" y="794.50" width="22.25" height="206.20" fill="#adc6ff"/><rect x="1547.00" y="811.00" width="22.25" height="189.70" fill="#adc6ff"/><rect x="1626.75" y="792.25" width="22.25" height="208.45" fill="#adc6ff"/><rect x="1706.50" y="803.25" width="22.25" height="197.45" fill="#adc6ff"/><rect x="1786.25" y="783.75" width="22.25" height="216.95" fill="#adc6ff"/><rect x="1866.00" y="766.00" width="22.25" height="234.70" fill="#adc6ff"/><rect x="1945.75" y="765.00" width="22.25" height="235.70" fill="#adc6ff"/><rect x="2025.50" y="790.50" width="22.25" height="210.20" fill="#adc6ff"/><rect x="2105.25" y="796.25" width="22.25" height="204.45" fill="#adc6ff"/><rect x="2185.00" y="789.75" width="22.25" height="210.95" fill="#adc6ff"/><rect x="2264.75" y="783.50" width="22.25" height="217.20" fill="#adc6ff"/><rect x="2344.50" y="790.75" width="22.25" height="209.95" fill="#adc6ff"/><rect x="2424.25" y="768.25" width="22.25" height="232.45" fill="#adc6ff"/><rect x="2504.00" y="760.25" width="22.25" height="240.45" fill="#adc6ff"/><rect x="2583.75" y="778.00" width="22.25" height="222.70" fill="#adc6ff"/><rect x="220.50" y="745.50" width="22.25" height="255.20" fill="#3a6cea"/><rect x="300.25" y="732.00" width="22.25" height="268.70" fill="#3a6cea"/><rect x="380.00" y="740.75" width="22.25" height="259.95" fill="#3a6cea"/><rect x="459.75" y="704.75" width="22.25" height="295.95" fill="#3a6cea"/><rect x="539.50" y="758.00" width="22.25" height="242.70" fill="#3a6cea"/><rect x="619.25" y="720.00" width="22.25" height="280.70" fill="#3a6cea"/><rect x="699.00" y="710.00" width="22.25" height="290.70" fill="#3a6cea"/><rect x="778.75" y="720.00" width="22.25" height="280.70" fill="#3a6cea"/><rect x="858.50" y="719.50" width="22.25" height="281.20" fill="#3a6cea"/><rect x="938.25" y="716.00" width="22.25" height="284.70" fill="#3a6cea"/><rect x="1018.00" y="709.25" width="22.25" height="291.45" fill="#3a6cea"/><rect x="1097.75" y="745.00" width="22.25" height="255.70" fill="#3a6cea"/><g transform="translate(2487.80,636.40) scale(0.4456,0.4250) translate(-11.5,-2)"><path d="M17.5,17.3H33 M45.4,29.5h-28 M11.5,2v56H51V14.8L38.4,2H11.5z M38.4,2.2v12.7H51 M45.4,41.7h-28" fill="none" stroke="#707070" stroke-width="1.5" vector-effect="non-scaling-stroke"/></g><g transform="translate(2523.90,635.60) scale(0.4494,0.4755) translate(-4.1,-6.9)"><path d="M4.1,28.9h7.1l9.3-22l7.4,38l9.7-19.7l3,12.8h14.9M4.1,58h51.4" fill="none" stroke="#707070" stroke-width="1.5" vector-effect="non-scaling-stroke"/></g><g transform="translate(2565.90,636.40) scale(0.4041,0.4214) translate(-3.1,-2)"><path d="M6.7,22.9h10V48h-10V22.9zM24.9,13h10v35h-10V13zM43.2,2h10v46h-10V2zM3.1,58h53.7" fill="none" stroke="#707070" stroke-width="1.5" vector-effect="non-scaling-stroke"/></g><g transform="translate(2606.20,636.30) scale(0.4337,0.4306) translate(-2.1,-1.9)"><path d="M47,18.9h9.8V8.7 M56.3,20.1 C52.1,9,40.5,0.6,26.8,2.1C12.6,3.7,1.6,16.2,2.1,30.6 M13,41.1H3.1v10.2 M3.7,39.9c4.2,11.1,15.8,19.5,29.5,18 c14.2-1.6,25.2-14.1,24.7-28.5" fill="none" stroke="#707070" stroke-width="1.5" vector-effect="non-scaling-stroke"/></g><g transform="translate(2648.10,637.30) scale(0.4212,0.3948) translate(-4.6,0)"><path d="M4.7,22.9L29.3,45.5L54.7,23.4M4.6,43.6L4.6,58L53.8,58L53.8,43.6M29.2,45.1L29.2,0" fill="none" stroke="#707070" stroke-width="1.5" vector-effect="non-scaling-stroke"/></g></svg>
<!-- chart 2 -->
<div class="panel" style="left:55px;top:1083px;width:1288px;height:515px"></div>
<div class="t " style="left:270.00px;top:1105.89px;font-size:37px;line-height:44.4px;color:#222;font-weight:700;letter-spacing:1.6px">负荷曲线</div>
<div class="abs" style="left:440px;top:1117.3px;width:21px;height:21px;border-radius:50%;background:#409eff"></div>
<div class="abs" style="left:447.5px;top:1124.8px;width:6px;height:6px;border-radius:50%;background:#fff"></div>
<div class="t " style="left:475.50px;top:1114.42px;font-size:21px;line-height:25.2px;color:#409eff;font-weight:400;letter-spacing:3px">负荷</div>
<div class="abs" style="left:569.2px;top:1117.3px;width:21px;height:21px;border-radius:50%;background:#fff;border:1.5px solid #dcdfe6"></div>
<div class="t " style="left:604.80px;top:1114.42px;font-size:21px;line-height:25.2px;color:#606266;font-weight:400;letter-spacing:3px">负荷率</div>
<div class="abs" style="left:861.25px;top:1100px;width:450px;height:53.75px;border:1px solid #d9d9d9;border-radius:8px;background:#fff"></div>
<div class="t " style="left:878.00px;top:1116.83px;font-size:20px;line-height:24.0px;color:#2b2b2b;font-weight:700;">上海</div>
<div class="t " style="left:1049.40px;top:1116.83px;font-size:20px;line-height:24.0px;color:#2b2b2b;font-weight:700;">有限公司</div>
<div class="abs" style="left:917.5px;top:1117.8px;width:132.5px;height:32px;border-radius:16px;overflow:hidden"><svg style="left:0;top:0" width="133" height="34"><rect x="0.0" y="0" width="23" height="17.5" fill="#d2d2d2"/><rect x="22.2" y="0" width="23" height="17.5" fill="#cfcfcf"/><rect x="44.4" y="0" width="23" height="17.5" fill="#c6c6c6"/><rect x="66.6" y="0" width="23" height="17.5" fill="#cdcdcd"/><rect x="88.8" y="0" width="23" height="17.5" fill="#c4c4c4"/><rect x="111.0" y="0" width="23" height="17.5" fill="#bcbcbc"/><rect x="0.0" y="17" width="23" height="17.5" fill="#d6d6d6"/><rect x="22.2" y="17" width="23" height="17.5" fill="#d9d9d9"/><rect x="44.4" y="17" width="23" height="17.5" fill="#e1e1e1"/><rect x="66.6" y="17" width="23" height="17.5" fill="#dcdcdc"/><rect x="88.8" y="17" width="23" height="17.5" fill="#dfdfdf"/><rect x="111.0" y="17" width="23" height="17.5" fill="#d8d8d8"/></svg></div>
<svg style="left:1250.90px;top:1121.00px" width="12.20" height="12.20" viewBox="0 0 12.2 12.2" preserveAspectRatio="none"><path d="M1 1 L11.2 11.2 M11.2 1 L1 11.2" stroke="#c8c8c8" stroke-width="2.2"/></svg>
<svg style="left:1280.00px;top:1122.90px" width="14.20" height="7.20" viewBox="0 0 14.2 7.2" preserveAspectRatio="none"><path d="M0 0 H14.2 L7.1 7.2 Z" fill="#c8c8c8"/></svg>
<svg style="left:0;top:0" width="2736" height="1622" viewBox="0 0 2736 1622"><line x1="95" x2="132.5" y1="1170" y2="1170" stroke="#3a6cea" stroke-width="1.6"/><circle cx="113.9" cy="1170" r="8.2" fill="#fff" stroke="#3a6cea" stroke-width="1.5"/><text x="140" y="1176.4" font-size="18" fill="#4d4d4d">总负荷率</text><line x1="228" x2="265.5" y1="1170" y2="1170" stroke="#ffff00" stroke-width="1.6"/><circle cx="246.9" cy="1170" r="8.2" fill="#fff" stroke="#ffff00" stroke-width="1.5"/><text x="273.3" y="1176.4" font-size="18" fill="#4d4d4d">A相负荷率</text><line x1="373.75" x2="411.25" y1="1170" y2="1170" stroke="#1aff40" stroke-width="1.6"/><circle cx="392.65" cy="1170" r="8.2" fill="#fff" stroke="#1aff40" stroke-width="1.5"/><text x="418.8" y="1176.4" font-size="18" fill="#4d4d4d">B相负荷率</text><line x1="517.5" x2="555.0" y1="1170" y2="1170" stroke="#fb1240" stroke-width="1.6"/><circle cx="536.4" cy="1170" r="8.2" fill="#fff" stroke="#fb1240" stroke-width="1.5"/><text x="562.5" y="1176.4" font-size="18" fill="#4d4d4d">C相负荷率</text><line x1="133.0" x2="133.0" y1="1213.5" y2="1410.2" stroke="#333" stroke-width="1.5"/><line x1="132.3" x2="1268.0" y1="1409.5" y2="1409.5" stroke="#333" stroke-width="1.5"/><line x1="125.0" x2="133.0" y1="1409.50" y2="1409.50" stroke="#333" stroke-width="1.5"/><text x="119.8" y="1414.60" font-size="18" fill="#333" text-anchor="end">0</text><line x1="125.0" x2="133.0" y1="1376.88" y2="1376.88" stroke="#333" stroke-width="1.5"/><text x="119.8" y="1381.98" font-size="18" fill="#333" text-anchor="end">100</text><line x1="125.0" x2="133.0" y1="1344.26" y2="1344.26" stroke="#333" stroke-width="1.5"/><text x="119.8" y="1349.36" font-size="18" fill="#333" text-anchor="end">200</text><line x1="125.0" x2="133.0" y1="1311.64" y2="1311.64" stroke="#333" stroke-width="1.5"/><text x="119.8" y="1316.74" font-size="18" fill="#333" text-anchor="end">300</text><line x1="125.0" x2="133.0" y1="1279.02" y2="1279.02" stroke="#333" stroke-width="1.5"/><text x="119.8" y="1284.12" font-size="18" fill="#333" text-anchor="end">400</text><line x1="125.0" x2="133.0" y1="1246.40" y2="1246.40" stroke="#333" stroke-width="1.5"/><text x="119.8" y="1251.50" font-size="18" fill="#333" text-anchor="end">500</text><line x1="125.0" x2="133.0" y1="1213.78" y2="1213.78" stroke="#333" stroke-width="1.5"/><text x="119.8" y="1218.88" font-size="18" fill="#333" text-anchor="end">600</text><line x1="133.00" x2="133.00" y1="1409.5" y2="1416.3" stroke="#333" stroke-width="1.5"/><line x1="178.37" x2="178.37" y1="1409.5" y2="1416.3" stroke="#333" stroke-width="1.5"/><line x1="223.74" x2="223.74" y1="1409.5" y2="1416.3" stroke="#333" stroke-width="1.5"/><line x1="269.12" x2="269.12" y1="1409.5" y2="1416.3" stroke="#333" stroke-width="1.5"/><line x1="314.49" x2="314.49" y1="1409.5" y2="1416.3" stroke="#333" stroke-width="1.5"/><line x1="359.86" x2="359.86" y1="1409.5" y2="1416.3" stroke="#333" stroke-width="1.5"/><line x1="405.23" x2="405.23" y1="1409.5" y2="1416.3" stroke="#333" stroke-width="1.5"/><line x1="450.60" x2="450.60" y1="1409.5" y2="1416.3" stroke="#333" stroke-width="1.5"/><line x1="495.98" x2="495.98" y1="1409.5" y2="1416.3" stroke="#333" stroke-width="1.5"/><line x1="541.35" x2="541.35" y1="1409.5" y2="1416.3" stroke="#333" stroke-width="1.5"/><line x1="586.72" x2="586.72" y1="1409.5" y2="1416.3" stroke="#333" stroke-width="1.5"/><line x1="632.09" x2="632.09" y1="1409.5" y2="1416.3" stroke="#333" stroke-width="1.5"/><line x1="677.46" x2="677.46" y1="1409.5" y2="1416.3" stroke="#333" stroke-width="1.5"/><line x1="722.84" x2="722.84" y1="1409.5" y2="1416.3" stroke="#333" stroke-width="1.5"/><line x1="768.21" x2="768.21" y1="1409.5" y2="1416.3" stroke="#333" stroke-width="1.5"/><line x1="813.58" x2="813.58" y1="1409.5" y2="1416.3" stroke="#333" stroke-width="1.5"/><line x1="858.95" x2="858.95" y1="1409.5" y2="1416.3" stroke="#333" stroke-width="1.5"/><line x1="904.32" x2="904.32" y1="1409.5" y2="1416.3" stroke="#333" stroke-width="1.5"/><line x1="949.70" x2="949.70" y1="1409.5" y2="1416.3" stroke="#333" stroke-width="1.5"/><line x1="995.07" x2="995.07" y1="1409.5" y2="1416.3" stroke="#333" stroke-width="1.5"/><line x1="1040.44" x2="1040.44" y1="1409.5" y2="1416.3" stroke="#333" stroke-width="1.5"/><line x1="1085.81" x2="1085.81" y1="1409.5" y2="1416.3" stroke="#333" stroke-width="1.5"/><line x1="1131.18" x2="1131.18" y1="1409.5" y2="1416.3" stroke="#333" stroke-width="1.5"/><line x1="1176.56" x2="1176.56" y1="1409.5" y2="1416.3" stroke="#333" stroke-width="1.5"/><line x1="1221.93" x2="1221.93" y1="1409.5" y2="1416.3" stroke="#333" stroke-width="1.5"/><line x1="1267.30" x2="1267.30" y1="1409.5" y2="1416.3" stroke="#333" stroke-width="1.5"/><text transform="translate(153.49,1421.00) rotate(-50)" x="0" y="6.2" font-size="18" letter-spacing="0.45" fill="#22598b" text-anchor="end">06-12 10:00</text><text transform="translate(198.86,1421.00) rotate(-50)" x="0" y="6.2" font-size="18" letter-spacing="0.45" fill="#22598b" text-anchor="end">06-12 11:00</text><text transform="translate(244.23,1421.00) rotate(-50)" x="0" y="6.2" font-size="18" letter-spacing="0.45" fill="#22598b" text-anchor="end">06-12 12:00</text><text transform="translate(289.60,1421.00) rotate(-50)" x="0" y="6.2" font-size="18" letter-spacing="0.45" fill="#22598b" text-anchor="end">06-12 13:00</text><text transform="translate(334.97,1421.00) rotate(-50)" x="0" y="6.2" font-size="18" letter-spacing="0.45" fill="#22598b" text-anchor="end">06-12 14:00</text><text transform="translate(380.35,1421.00) rotate(-50)" x="0" y="6.2" font-size="18" letter-spacing="0.45" fill="#22598b" text-anchor="end">06-12 15:00</text><text transform="translate(425.72,1421.00) rotate(-50)" x="0" y="6.2" font-size="18" letter-spacing="0.45" fill="#22598b" text-anchor="end">06-12 16:00</text><text transform="translate(471.09,1421.00) rotate(-50)" x="0" y="6.2" font-size="18" letter-spacing="0.45" fill="#22598b" text-anchor="end">06-12 17:00</text><text transform="translate(516.46,1421.00) rotate(-50)" x="0" y="6.2" font-size="18" letter-spacing="0.45" fill="#22598b" text-anchor="end">06-12 18:00</text><text transform="translate(561.83,1421.00) rotate(-50)" x="0" y="6.2" font-size="18" letter-spacing="0.45" fill="#22598b" text-anchor="end">06-12 19:00</text><text transform="translate(607.21,1421.00) rotate(-50)" x="0" y="6.2" font-size="18" letter-spacing="0.45" fill="#22598b" text-anchor="end">06-12 20:00</text><text transform="translate(652.58,1421.00) rotate(-50)" x="0" y="6.2" font-size="18" letter-spacing="0.45" fill="#22598b" text-anchor="end">06-12 21:00</text><text transform="translate(697.95,1421.00) rotate(-50)" x="0" y="6.2" font-size="18" letter-spacing="0.45" fill="#22598b" text-anchor="end">06-12 22:00</text><text transform="translate(743.32,1421.00) rotate(-50)" x="0" y="6.2" font-size="18" letter-spacing="0.45" fill="#22598b" text-anchor="end">06-12 23:00</text><text transform="translate(788.69,1421.00) rotate(-50)" x="0" y="6.2" font-size="18" letter-spacing="0.45" fill="#22598b" text-anchor="end">06-13 00:00</text><text transform="translate(834.07,1421.00) rotate(-50)" x="0" y="6.2" font-size="18" letter-spacing="0.45" fill="#22598b" text-anchor="end">06-13 01:00</text><text transform="translate(879.44,1421.00) rotate(-50)" x="0" y="6.2" font-size="18" letter-spacing="0.45" fill="#22598b" text-anchor="end">06-13 02:00</text><text transform="translate(924.81,1421.00) rotate(-50)" x="0" y="6.2" font-size="18" letter-spacing="0.45" fill="#22598b" text-anchor="end">06-13 03:00</text><text transform="translate(970.18,1421.00) rotate(-50)" x="0" y="6.2" font-size="18" letter-spacing="0.45" fill="#22598b" text-anchor="end">06-13 04:00</text><text transform="translate(1015.55,1421.00) rotate(-50)" x="0" y="6.2" font-size="18" letter-spacing="0.45" fill="#22598b" text-anchor="end">06-13 05:00</text><text transform="translate(1060.93,1421.00) rotate(-50)" x="0" y="6.2" font-size="18" letter-spacing="0.45" fill="#22598b" text-anchor="end">06-13 06:00</text><text transform="translate(1106.30,1421.00) rotate(-50)" x="0" y="6.2" font-size="18" letter-spacing="0.45" fill="#22598b" text-anchor="end">06-13 07:00</text><text transform="translate(1151.67,1421.00) rotate(-50)" x="0" y="6.2" font-size="18" letter-spacing="0.45" fill="#22598b" text-anchor="end">06-13 08:00</text><text transform="translate(1197.04,1421.00) rotate(-50)" x="0" y="6.2" font-size="18" letter-spacing="0.45" fill="#22598b" text-anchor="end">06-13 09:00</text><text transform="translate(1242.41,1421.00) rotate(-50)" x="0" y="6.2" font-size="18" letter-spacing="0.45" fill="#22598b" text-anchor="end">06-13 10:00</text><polyline points="154.59,1391.75 199.96,1290.00 245.33,1323.25 290.70,1336.75 336.07,1344.00 381.45,1338.00 426.82,1232.00 472.19,1318.75 517.56,1267.00 562.93,1339.50 608.31,1297.00 653.68,1285.25 699.05,1241.25 744.42,1287.25 789.79,1270.00 835.17,1294.50 880.54,1281.75 925.91,1257.25 971.28,1293.25 1016.65,1289.50 1062.03,1289.75 1107.40,1399.00 1152.77,1408.75 1198.14,1409.00 1243.51,1409.00" fill="none" stroke="#3a6cea" stroke-width="3" stroke-linejoin="bevel"/><circle cx="154.59" cy="1391.75" r="2.9" fill="#fff" stroke="#3a6cea" stroke-width="1.5"/><circle cx="199.96" cy="1290.00" r="2.9" fill="#fff" stroke="#3a6cea" stroke-width="1.5"/><circle cx="245.33" cy="1323.25" r="2.9" fill="#fff" stroke="#3a6cea" stroke-width="1.5"/><circle cx="290.70" cy="1336.75" r="2.9" fill="#fff" stroke="#3a6cea" stroke-width="1.5"/><circle cx="336.07" cy="1344.00" r="2.9" fill="#fff" stroke="#3a6cea" stroke-width="1.5"/><circle cx="381.45" cy="1338.00" r="2.9" fill="#fff" stroke="#3a6cea" stroke-width="1.5"/><circle cx="426.82" cy="1232.00" r="2.9" fill="#fff" stroke="#3a6cea" stroke-width="1.5"/><circle cx="472.19" cy="1318.75" r="2.9" fill="#fff" stroke="#3a6cea" stroke-width="1.5"/><circle cx="517.56" cy="1267.00" r="2.9" fill="#fff" stroke="#3a6cea" stroke-width="1.5"/><circle cx="562.93" cy="1339.50" r="2.9" fill="#fff" stroke="#3a6cea" stroke-width="1.5"/><circle cx="608.31" cy="1297.00" r="2.9" fill="#fff" stroke="#3a6cea" stroke-width="1.5"/><circle cx="653.68" cy="1285.25" r="2.9" fill="#fff" stroke="#3a6cea" stroke-width="1.5"/><circle cx="699.05" cy="1241.25" r="2.9" fill="#fff" stroke="#3a6cea" stroke-width="1.5"/><circle cx="744.42" cy="1287.25" r="2.9" fill="#fff" stroke="#3a6cea" stroke-width="1.5"/><circle cx="789.79" cy="1270.00" r="2.9" fill="#fff" stroke="#3a6cea" stroke-width="1.5"/><circle cx="835.17" cy="1294.50" r="2.9" fill="#fff" stroke="#3a6cea" stroke-width="1.5"/><circle cx="880.54" cy="1281.75" r="2.9" fill="#fff" stroke="#3a6cea" stroke-width="1.5"/><circle cx="925.91" cy="1257.25" r="2.9" fill="#fff" stroke="#3a6cea" stroke-width="1.5"/><circle cx="971.28" cy="1293.25" r="2.9" fill="#fff" stroke="#3a6cea" stroke-width="1.5"/><circle cx="1016.65" cy="1289.50" r="2.9" fill="#fff" stroke="#3a6cea" stroke-width="1.5"/><circle cx="1062.03" cy="1289.75" r="2.9" fill="#fff" stroke="#3a6cea" stroke-width="1.5"/><circle cx="1107.40" cy="1399.00" r="2.9" fill="#fff" stroke="#3a6cea" stroke-width="1.5"/><circle cx="1152.77" cy="1408.75" r="2.9" fill="#fff" stroke="#3a6cea" stroke-width="1.5"/><circle cx="1198.14" cy="1409.00" r="2.9" fill="#fff" stroke="#3a6cea" stroke-width="1.5"/><circle cx="1243.51" cy="1409.00" r="2.9" fill="#fff" stroke="#3a6cea" stroke-width="1.5"/><polyline points="154.59,1402.50 199.96,1367.50 245.33,1379.50 290.70,1383.00 336.07,1385.50 381.45,1383.25 426.82,1347.50 472.19,1375.00 517.56,1358.75 562.93,1380.75 608.31,1368.75 653.68,1365.00 699.05,1351.25 744.42,1366.25 789.79,1360.50 835.17,1368.75 880.54,1363.75 925.91,1356.75 971.28,1368.25 1016.65,1366.25 1062.03,1366.25 1107.40,1403.75 1152.77,1409.00 1198.14,1409.00 1243.51,1409.00" fill="none" stroke="#ffff00" stroke-width="3" stroke-linejoin="bevel"/><circle cx="154.59" cy="1402.50" r="2.9" fill="#fff" stroke="#ffff00" stroke-width="1.5"/><circle cx="199.96" cy="1367.50" r="2.9" fill="#fff" stroke="#ffff00" stroke-width="1.5"/><circle cx="245.33" cy="1379.50" r="2.9" fill="#fff" stroke="#ffff00" stroke-width="1.5"/><circle cx="290.70" cy="1383.00" r="2.9" fill="#fff" stroke="#ffff00" stroke-width="1.5"/><circle cx="336.07" cy="1385.50" r="2.9" fill="#fff" stroke="#ffff00" stroke-width="1.5"/><circle cx="381.45" cy="1383.25" r="2.9" fill="#fff" stroke="#ffff00" stroke-width="1.5"/><circle cx="426.82" cy="1347.50" r="2.9" fill="#fff" stroke="#ffff00" stroke-width="1.5"/><circle cx="472.19" cy="1375.00" r="2.9" fill="#fff" stroke="#ffff00" stroke-width="1.5"/><circle cx="517.56" cy="1358.75" r="2.9" fill="#fff" stroke="#ffff00" stroke-width="1.5"/><circle cx="562.93" cy="1380.75" r="2.9" fill="#fff" stroke="#ffff00" stroke-width="1.5"/><circle cx="608.31" cy="1368.75" r="2.9" fill="#fff" stroke="#ffff00" stroke-width="1.5"/><circle cx="653.68" cy="1365.00" r="2.9" fill="#fff" stroke="#ffff00" stroke-width="1.5"/><circle cx="699.05" cy="1351.25" r="2.9" fill="#fff" stroke="#ffff00" stroke-width="1.5"/><circle cx="744.42" cy="1366.25" r="2.9" fill="#fff" stroke="#ffff00" stroke-width="1.5"/><circle cx="789.79" cy="1360.50" r="2.9" fill="#fff" stroke="#ffff00" stroke-width="1.5"/><circle cx="835.17" cy="1368.75" r="2.9" fill="#fff" stroke="#ffff00" stroke-width="1.5"/><circle cx="880.54" cy="1363.75" r="2.9" fill="#fff" stroke="#ffff00" stroke-width="1.5"/><circle cx="925.91" cy="1356.75" r="2.9" fill="#fff" stroke="#ffff00" stroke-width="1.5"/><circle cx="971.28" cy="1368.25" r="2.9" fill="#fff" stroke="#ffff00" stroke-width="1.5"/><circle cx="1016.65" cy="1366.25" r="2.9" fill="#fff" stroke="#ffff00" stroke-width="1.5"/><circle cx="1062.03" cy="1366.25" r="2.9" fill="#fff" stroke="#ffff00" stroke-width="1.5"/><circle cx="1107.40" cy="1403.75" r="2.9" fill="#fff" stroke="#ffff00" stroke-width="1.5"/><circle cx="1152.77" cy="1409.00" r="2.9" fill="#fff" stroke="#ffff00" stroke-width="1.5"/><circle cx="1198.14" cy="1409.00" r="2.9" fill="#fff" stroke="#ffff00" stroke-width="1.5"/><circle cx="1243.51" cy="1409.00" r="2.9" fill="#fff" stroke="#ffff00" stroke-width="1.5"/><polyline points="154.59,1403.25 199.96,1368.25 245.33,1380.75 290.70,1385.50 336.07,1387.00 381.45,1384.50 426.82,1352.00 472.19,1380.75 517.56,1364.25 562.93,1388.75 608.31,1373.75 653.68,1369.50 699.05,1355.00 744.42,1370.00 789.79,1365.00 835.17,1372.50 880.54,1368.25 925.91,1360.00 971.28,1371.75 1016.65,1370.00 1062.03,1369.50 1107.40,1405.00 1152.77,1408.25 1198.14,1409.00 1243.51,1409.00" fill="none" stroke="#1aff40" stroke-width="3" stroke-linejoin="bevel"/><circle cx="154.59" cy="1403.25" r="2.9" fill="#fff" stroke="#1aff40" stroke-width="1.5"/><circle cx="199.96" cy="1368.25" r="2.9" fill="#fff" stroke="#1aff40" stroke-width="1.5"/><circle cx="245.33" cy="1380.75" r="2.9" fill="#fff" stroke="#1aff40" stroke-width="1.5"/><circle cx="290.70" cy="1385.50" r="2.9" fill="#fff" stroke="#1aff40" stroke-width="1.5"/><circle cx="336.07" cy="1387.00" r="2.9" fill="#fff" stroke="#1aff40" stroke-width="1.5"/><circle cx="381.45" cy="1384.50" r="2.9" fill="#fff" stroke="#1aff40" stroke-width="1.5"/><circle cx="426.82" cy="1352.00" r="2.9" fill="#fff" stroke="#1aff40" stroke-width="1.5"/><circle cx="472.19" cy="1380.75" r="2.9" fill="#fff" stroke="#1aff40" stroke-width="1.5"/><circle cx="517.56" cy="1364.25" r="2.9" fill="#fff" stroke="#1aff40" stroke-width="1.5"/><circle cx="562.93" cy="1388.75" r="2.9" fill="#fff" stroke="#1aff40" stroke-width="1.5"/><circle cx="608.31" cy="1373.75" r="2.9" fill="#fff" stroke="#1aff40" stroke-width="1.5"/><circle cx="653.68" cy="1369.50" r="2.9" fill="#fff" stroke="#1aff40" stroke-width="1.5"/><circle cx="699.05" cy="1355.00" r="2.9" fill="#fff" stroke="#1aff40" stroke-width="1.5"/><circle cx="744.42" cy="1370.00" r="2.9" fill="#fff" stroke="#1aff40" stroke-width="1.5"/><circle cx="789.79" cy="1365.00" r="2.9" fill="#fff" stroke="#1aff40" stroke-width="1.5"/><circle cx="835.17" cy="1372.50" r="2.9" fill="#fff" stroke="#1aff40" stroke-width="1.5"/><circle cx="880.54" cy="1368.25" r="2.9" fill="#fff" stroke="#1aff40" stroke-width="1.5"/><circle cx="925.91" cy="1360.00" r="2.9" fill="#fff" stroke="#1aff40" stroke-width="1.5"/><circle cx="971.28" cy="1371.75" r="2.9" fill="#fff" stroke="#1aff40" stroke-width="1.5"/><circle cx="1016.65" cy="1370.00" r="2.9" fill="#fff" stroke="#1aff40" stroke-width="1.5"/><circle cx="1062.03" cy="1369.50" r="2.9" fill="#fff" stroke="#1aff40" stroke-width="1.5"/><circle cx="1107.40" cy="1405.00" r="2.9" fill="#fff" stroke="#1aff40" stroke-width="1.5"/><circle cx="1152.77" cy="1408.25" r="2.9" fill="#fff" stroke="#1aff40" stroke-width="1.5"/><circle cx="1198.14" cy="1409.00" r="2.9" fill="#fff" stroke="#1aff40" stroke-width="1.5"/><circle cx="1243.51" cy="1409.00" r="2.9" fill="#fff" stroke="#1aff40" stroke-width="1.5"/><polyline points="154.59,1404.00 199.96,1370.00 245.33,1382.50 290.70,1386.25 336.07,1389.25 381.45,1387.50 426.82,1350.50 472.19,1381.25 517.56,1361.75 562.93,1388.00 608.31,1372.50 653.68,1366.50 699.05,1353.25 744.42,1369.25 789.79,1364.25 835.17,1371.50 880.54,1367.75 925.91,1359.00 971.28,1371.25 1016.65,1370.50 1062.03,1370.00 1107.40,1407.00 1152.77,1409.00 1198.14,1409.00 1243.51,1409.00" fill="none" stroke="#fb1240" stroke-width="3" stroke-linejoin="bevel"/><circle cx="154.59" cy="1404.00" r="2.9" fill="#fff" stroke="#fb1240" stroke-width="1.5"/><circle cx="199.96" cy="1370.00" r="2.9" fill="#fff" stroke="#fb1240" stroke-width="1.5"/><circle cx="245.33" cy="1382.50" r="2.9" fill="#fff" stroke="#fb1240" stroke-width="1.5"/><circle cx="290.70" cy="1386.25" r="2.9" fill="#fff" stroke="#fb1240" stroke-width="1.5"/><circle cx="336.07" cy="1389.25" r="2.9" fill="#fff" stroke="#fb1240" stroke-width="1.5"/><circle cx="381.45" cy="1387.50" r="2.9" fill="#fff" stroke="#fb1240" stroke-width="1.5"/><circle cx="426.82" cy="1350.50" r="2.9" fill="#fff" stroke="#fb1240" stroke-width="1.5"/><circle cx="472.19" cy="1381.25" r="2.9" fill="#fff" stroke="#fb1240" stroke-width="1.5"/><circle cx="517.56" cy="1361.75" r="2.9" fill="#fff" stroke="#fb1240" stroke-width="1.5"/><circle cx="562.93" cy="1388.00" r="2.9" fill="#fff" stroke="#fb1240" stroke-width="1.5"/><circle cx="608.31" cy="1372.50" r="2.9" fill="#fff" stroke="#fb1240" stroke-width="1.5"/><circle cx="653.68" cy="1366.50" r="2.9" fill="#fff" stroke="#fb1240" stroke-width="1.5"/><circle cx="699.05" cy="1353.25" r="2.9" fill="#fff" stroke="#fb1240" stroke-width="1.5"/><circle cx="744.42" cy="1369.25" r="2.9" fill="#fff" stroke="#fb1240" stroke-width="1.5"/><circle cx="789.79" cy="1364.25" r="2.9" fill="#fff" stroke="#fb1240" stroke-width="1.5"/><circle cx="835.17" cy="1371.50" r="2.9" fill="#fff" stroke="#fb1240" stroke-width="1.5"/><circle cx="880.54" cy="1367.75" r="2.9" fill="#fff" stroke="#fb1240" stroke-width="1.5"/><circle cx="925.91" cy="1359.00" r="2.9" fill="#fff" stroke="#fb1240" stroke-width="1.5"/><circle cx="971.28" cy="1371.25" r="2.9" fill="#fff" stroke="#fb1240" stroke-width="1.5"/><circle cx="1016.65" cy="1370.50" r="2.9" fill="#fff" stroke="#fb1240" stroke-width="1.5"/><circle cx="1062.03" cy="1370.00" r="2.9" fill="#fff" stroke="#fb1240" stroke-width="1.5"/><circle cx="1107.40" cy="1407.00" r="2.9" fill="#fff" stroke="#fb1240" stroke-width="1.5"/><circle cx="1152.77" cy="1409.00" r="2.9" fill="#fff" stroke="#fb1240" stroke-width="1.5"/><circle cx="1198.14" cy="1409.00" r="2.9" fill="#fff" stroke="#fb1240" stroke-width="1.5"/><circle cx="1243.51" cy="1409.00" r="2.9" fill="#fff" stroke="#fb1240" stroke-width="1.5"/><line x1="133.0" x2="1244.3" y1="1316.60" y2="1316.60" stroke="#3a6cea" stroke-width="1.5" stroke-dasharray="6.5 5.55"/><circle cx="133.0" cy="1316.60" r="5.9" fill="#3a6cea"/><path d="M1266.80 1316.60 L1242.80 1308.60 L1248.80 1316.60 L1242.80 1324.60 Z" fill="#3a6cea"/><text x="1273.6" y="1320.60" font-size="18" letter-spacing="0.2" fill="#3a6cea">286.77</text><line x1="133.0" x2="1244.3" y1="1375.80" y2="1375.80" stroke="#ffff00" stroke-width="1.5" stroke-dasharray="6.5 5.55"/><circle cx="133.0" cy="1375.80" r="5.9" fill="#ffff00"/><path d="M1266.80 1375.80 L1242.80 1367.80 L1248.80 1375.80 L1242.80 1383.80 Z" fill="#ffff00"/><text x="1273.6" y="1379.20" font-size="18" letter-spacing="0.2" fill="#ffff00">101.69</text><line x1="133.0" x2="1244.3" y1="1379.60" y2="1379.60" stroke="#1aff40" stroke-width="1.5" stroke-dasharray="6.5 5.55"/><circle cx="133.0" cy="1379.60" r="5.9" fill="#1aff40"/><path d="M1266.80 1379.60 L1242.80 1371.60 L1248.80 1379.60 L1242.80 1387.60 Z" fill="#1aff40"/><text x="1273.6" y="1383.00" font-size="18" letter-spacing="0.2" fill="#1aff40">91.84</text><line x1="133.0" x2="1244.3" y1="1379.40" y2="1379.40" stroke="#fb1240" stroke-width="1.5" stroke-dasharray="6.5 5.55"/><circle cx="133.0" cy="1379.40" r="5.9" fill="#fb1240"/><path d="M1266.80 1379.40 L1242.80 1371.40 L1248.80 1379.40 L1242.80 1387.40 Z" fill="#fb1240"/><text x="1273.6" y="1382.80" font-size="18" letter-spacing="0.2" fill="#fb1240">92.68</text><path d="M406.89 1200.18 A22.5 22.5 0 1 1 446.75 1200.18 C440.49 1212.14 426.82 1212.05 426.82 1227.80 C426.82 1212.05 413.15 1212.14 406.89 1200.18 Z" fill="#3a6cea"/><text x="426.82" y="1197.3" font-size="18" fill="#fff" stroke="#fff" stroke-width="0.6" text-anchor="middle">545</text><path d="M406.49 1313.09 A22.5 22.5 0 1 1 447.15 1313.09 C441.36 1325.28 426.82 1330.55 426.82 1346.30 C426.82 1330.55 412.27 1325.28 406.49 1313.09 Z" fill="#ffff00"/><text x="424.32" y="1314.00" font-size="18" fill="#fff" stroke="#ffff00" stroke-width="3" paint-order="stroke" text-anchor="middle">186.53</text><path d="M406.49 1316.99 A22.5 22.5 0 1 1 447.15 1316.99 C441.36 1329.18 426.82 1334.45 426.82 1350.20 C426.82 1334.45 412.27 1329.18 406.49 1316.99 Z" fill="#1aff40"/><text x="428.02" y="1317.90" font-size="18" fill="#fff" stroke="#1aff40" stroke-width="3" paint-order="stroke" text-anchor="middle">178.96</text><path d="M406.49 1315.54 A22.5 22.5 0 1 1 447.15 1315.54 C441.36 1327.73 426.82 1333.00 426.82 1348.75 C426.82 1333.00 412.27 1327.73 406.49 1315.54 Z" fill="#fb1240"/><text x="426.82" y="1316.45" font-size="18" fill="#fff" stroke="#fb1240" stroke-width="3" paint-order="stroke" text-anchor="middle">180.29</text><path d="M1132.44 1375.29 A22.5 22.5 0 1 1 1173.10 1375.29 C1167.31 1387.48 1152.77 1392.75 1152.77 1408.50 C1152.77 1392.75 1138.23 1387.48 1132.44 1375.29 Z" fill="#fb1240"/><text x="1152.77" y="1374.6" font-size="18" fill="#fff" text-anchor="middle">0</text><rect x="135.0" y="1503.75" width="1135.0" height="44.55" fill="#dce2eb"/><polygon points="135.0,1548.3 135.0,1537.2 182.3,1521.2 229.6,1526.4 276.9,1528.6 324.2,1529.7 371.5,1528.8 418.8,1512.2 466.0,1525.7 513.3,1517.6 560.6,1529.0 607.9,1522.3 655.2,1520.5 702.5,1513.6 749.8,1520.8 797.1,1518.1 844.4,1521.9 891.7,1519.9 939.0,1516.1 986.2,1521.7 1033.5,1521.2 1080.8,1521.2 1128.1,1538.3 1175.4,1539.8 1222.7,1539.9 1270.0,1539.9 1270.0,1548.3" fill="#d0d8e2"/><polyline points="135.0,1537.2 182.3,1521.2 229.6,1526.4 276.9,1528.6 324.2,1529.7 371.5,1528.8 418.8,1512.2 466.0,1525.7 513.3,1517.6 560.6,1529.0 607.9,1522.3 655.2,1520.5 702.5,1513.6 749.8,1520.8 797.1,1518.1 844.4,1521.9 891.7,1519.9 939.0,1516.1 986.2,1521.7 1033.5,1521.2 1080.8,1521.2 1128.1,1538.3 1175.4,1539.8 1222.7,1539.9 1270.0,1539.9" fill="none" stroke="#c1cad7" stroke-width="0.9"/><line x1="135.0" x2="135.0" y1="1503.75" y2="1548.3" stroke="#a7b7cc" stroke-width="1.6"/><rect x="129.6" y="1516.3" width="10.9" height="19.2" fill="#a7b7cc"/><path d="M132.5 1522.6 H137.5 M132.5 1529.2 H137.5" stroke="#eef1f6" stroke-width="1.4"/><line x1="1270.0" x2="1270.0" y1="1503.75" y2="1548.3" stroke="#a7b7cc" stroke-width="1.6"/><rect x="1264.6" y="1516.3" width="10.9" height="19.2" fill="#a7b7cc"/><path d="M1267.5 1522.6 H1272.5 M1267.5 1529.2 H1272.5" stroke="#eef1f6" stroke-width="1.4"/><g transform="translate(1185.40,1162.60) scale(0.4553,0.5068) translate(-4.1,-6.9)"><path d="M4.1,28.9h7.1l9.3-22l7.4,38l9.7-19.7l3,12.8h14.9M4.1,58h51.4" fill="none" stroke="#707070" stroke-width="1.5" vector-effect="non-scaling-stroke"/></g><g transform="translate(1227.75,1164.60) scale(0.4078,0.4268) translate(-3.1,-2)"><path d="M6.7,22.9h10V48h-10V22.9zM24.9,13h10v35h-10V13zM43.2,2h10v46h-10V2zM3.1,58h53.7" fill="none" stroke="#707070" stroke-width="1.5" vector-effect="non-scaling-stroke"/></g><g transform="translate(1267.90,1164.40) scale(0.4355,0.4288) translate(-2.1,-1.9)"><path d="M47,18.9h9.8V8.7 M56.3,20.1 C52.1,9,40.5,0.6,26.8,2.1C12.6,3.7,1.6,16.2,2.1,30.6 M13,41.1H3.1v10.2 M3.7,39.9c4.2,11.1,15.8,19.5,29.5,18 c14.2-1.6,25.2-14.1,24.7-28.5" fill="none" stroke="#707070" stroke-width="1.5" vector-effect="non-scaling-stroke"/></g><g transform="translate(1310.00,1165.25) scale(0.4192,0.4000) translate(-4.6,0)"><path d="M4.7,22.9L29.3,45.5L54.7,23.4M4.6,43.6L4.6,58L53.8,58L53.8,43.6M29.2,45.1L29.2,0" fill="none" stroke="#707070" stroke-width="1.5" vector-effect="non-scaling-stroke"/></g></svg>
<!-- chart 3 -->
<div class="panel" style="left:1369px;top:1083px;width:1315px;height:515px"></div>
<div class="t " style="left:1885.30px;top:1105.49px;font-size:36px;line-height:43.2px;color:#222;font-weight:700;letter-spacing:2.9px">尖峰平谷时段用电</div>
<svg style="left:0;top:0" width="2736" height="1622" viewBox="0 0 2736 1622"><rect x="1438.25" y="1161.25" width="37.5" height="21.25" rx="5.5" fill="#ff2828"/><text x="1483.15" y="1178.3" font-size="18" fill="#4d4d4d">尖时段用电</text><rect x="1588.4" y="1161.25" width="37.5" height="21.25" rx="5.5" fill="#3a6cea"/><text x="1633.3000000000002" y="1178.3" font-size="18" fill="#4d4d4d">峰时段用电</text><rect x="1738.6" y="1161.25" width="37.5" height="21.25" rx="5.5" fill="#fcdb3f"/><text x="1783.5" y="1178.3" font-size="18" fill="#4d4d4d">平时段用电</text><rect x="1888.8" y="1161.25" width="37.5" height="21.25" rx="5.5" fill="#34c43a"/><text x="1933.7" y="1178.3" font-size="18" fill="#4d4d4d">谷时段用电</text><line x1="1483.75" x2="2652.5" y1="1529.25" y2="1529.25" stroke="#e9e9ee" stroke-width="1.6"/><text x="1478.9" y="1534.05" font-size="18" letter-spacing="0.4" fill="#aaa" text-anchor="end">0</text><line x1="1483.75" x2="2652.5" y1="1463.35" y2="1463.35" stroke="#f0f0f3" stroke-width="1.6"/><text x="1478.9" y="1468.15" font-size="18" letter-spacing="0.4" fill="#aaa" text-anchor="end">5,000</text><line x1="1483.75" x2="2652.5" y1="1397.45" y2="1397.45" stroke="#f0f0f3" stroke-width="1.6"/><text x="1478.9" y="1402.25" font-size="18" letter-spacing="0.4" fill="#aaa" text-anchor="end">10,000</text><line x1="1483.75" x2="2652.5" y1="1331.55" y2="1331.55" stroke="#f0f0f3" stroke-width="1.6"/><text x="1478.9" y="1336.35" font-size="18" letter-spacing="0.4" fill="#aaa" text-anchor="end">15,000</text><line x1="1483.75" x2="2652.5" y1="1265.65" y2="1265.65" stroke="#f0f0f3" stroke-width="1.6"/><text x="1478.9" y="1270.45" font-size="18" letter-spacing="0.4" fill="#aaa" text-anchor="end">20,000</text><line x1="1483.75" x2="2652.5" y1="1199.75" y2="1199.75" stroke="#f0f0f3" stroke-width="1.6"/><text x="1478.9" y="1204.55" font-size="18" letter-spacing="0.4" fill="#aaa" text-anchor="end">25,000</text><line x1="1491.50" x2="1491.50" y1="1529.25" y2="1536.25" stroke="#e9e9ee" stroke-width="1.6"/><text x="1509.72" y="1554.6" font-size="18" letter-spacing="0.7" fill="#aaa" text-anchor="middle">2022-05-13</text><line x1="1641.28" x2="1641.28" y1="1529.25" y2="1536.25" stroke="#e9e9ee" stroke-width="1.6"/><text x="1659.51" y="1554.6" font-size="18" letter-spacing="0.7" fill="#aaa" text-anchor="middle">2022-05-17</text><line x1="1791.07" x2="1791.07" y1="1529.25" y2="1536.25" stroke="#e9e9ee" stroke-width="1.6"/><text x="1809.29" y="1554.6" font-size="18" letter-spacing="0.7" fill="#aaa" text-anchor="middle">2022-05-21</text><line x1="1940.85" x2="1940.85" y1="1529.25" y2="1536.25" stroke="#e9e9ee" stroke-width="1.6"/><text x="1959.07" y="1554.6" font-size="18" letter-spacing="0.7" fill="#aaa" text-anchor="middle">2022-05-25</text><line x1="2090.64" x2="2090.64" y1="1529.25" y2="1536.25" stroke="#e9e9ee" stroke-width="1.6"/><text x="2108.86" y="1554.6" font-size="18" letter-spacing="0.7" fill="#aaa" text-anchor="middle">2022-05-29</text><line x1="2240.42" x2="2240.42" y1="1529.25" y2="1536.25" stroke="#e9e9ee" stroke-width="1.6"/><text x="2258.64" y="1554.6" font-size="18" letter-spacing="0.7" fill="#aaa" text-anchor="middle">2022-06-02</text><line x1="2390.20" x2="2390.20" y1="1529.25" y2="1536.25" stroke="#e9e9ee" stroke-width="1.6"/><text x="2408.43" y="1554.6" font-size="18" letter-spacing="0.7" fill="#aaa" text-anchor="middle">2022-06-06</text><line x1="2539.99" x2="2539.99" y1="1529.25" y2="1536.25" stroke="#e9e9ee" stroke-width="1.6"/><text x="2558.21" y="1554.6" font-size="18" letter-spacing="0.7" fill="#aaa" text-anchor="middle">2022-06-10</text><line x1="2652.33" x2="2652.33" y1="1529.25" y2="1536.25" stroke="#e9e9ee" stroke-width="1.6"/><rect x="1495.35" y="1358.75" width="29.75" height="73.50" fill="#34c43a"/><rect x="1495.35" y="1432.25" width="29.75" height="49.00" fill="#fcdb3f"/><rect x="1495.35" y="1481.25" width="29.75" height="37.50" fill="#3a6cea"/><rect x="1495.35" y="1518.75" width="29.75" height="9.90" fill="#ff2828"/><rect x="1532.79" y="1350.50" width="29.75" height="73.00" fill="#34c43a"/><rect x="1532.79" y="1423.50" width="29.75" height="54.00" fill="#fcdb3f"/><rect x="1532.79" y="1477.50" width="29.75" height="40.50" fill="#3a6cea"/><rect x="1532.79" y="1518.00" width="29.75" height="10.65" fill="#ff2828"/><rect x="1570.24" y="1351.25" width="29.75" height="72.00" fill="#34c43a"/><rect x="1570.24" y="1423.25" width="29.75" height="54.00" fill="#fcdb3f"/><rect x="1570.24" y="1477.25" width="29.75" height="39.50" fill="#3a6cea"/><rect x="1570.24" y="1516.75" width="29.75" height="11.90" fill="#ff2828"/><rect x="1607.69" y="1322.25" width="29.75" height="81.00" fill="#34c43a"/><rect x="1607.69" y="1403.25" width="29.75" height="63.75" fill="#fcdb3f"/><rect x="1607.69" y="1467.00" width="29.75" height="42.50" fill="#3a6cea"/><rect x="1607.69" y="1509.50" width="29.75" height="19.15" fill="#ff2828"/><rect x="1645.13" y="1322.75" width="29.75" height="84.75" fill="#34c43a"/><rect x="1645.13" y="1407.50" width="29.75" height="63.75" fill="#fcdb3f"/><rect x="1645.13" y="1471.25" width="29.75" height="42.25" fill="#3a6cea"/><rect x="1645.13" y="1513.50" width="29.75" height="15.15" fill="#ff2828"/><rect x="1682.58" y="1339.00" width="29.75" height="87.75" fill="#34c43a"/><rect x="1682.58" y="1426.75" width="29.75" height="56.00" fill="#fcdb3f"/><rect x="1682.58" y="1482.75" width="29.75" height="36.00" fill="#3a6cea"/><rect x="1682.58" y="1518.75" width="29.75" height="9.90" fill="#ff2828"/><rect x="1720.02" y="1320.50" width="29.75" height="80.00" fill="#34c43a"/><rect x="1720.02" y="1400.50" width="29.75" height="70.50" fill="#fcdb3f"/><rect x="1720.02" y="1471.00" width="29.75" height="45.75" fill="#3a6cea"/><rect x="1720.02" y="1516.75" width="29.75" height="11.90" fill="#ff2828"/><rect x="1757.47" y="1331.25" width="29.75" height="93.25" fill="#34c43a"/><rect x="1757.47" y="1424.50" width="29.75" height="49.75" fill="#fcdb3f"/><rect x="1757.47" y="1474.25" width="29.75" height="41.25" fill="#3a6cea"/><rect x="1757.47" y="1515.50" width="29.75" height="13.15" fill="#ff2828"/><rect x="1794.92" y="1311.75" width="29.75" height="97.25" fill="#34c43a"/><rect x="1794.92" y="1409.00" width="29.75" height="56.00" fill="#fcdb3f"/><rect x="1794.92" y="1465.00" width="29.75" height="48.75" fill="#3a6cea"/><rect x="1794.92" y="1513.75" width="29.75" height="14.90" fill="#ff2828"/><rect x="1832.36" y="1294.25" width="29.75" height="99.75" fill="#34c43a"/><rect x="1832.36" y="1394.00" width="29.75" height="67.25" fill="#fcdb3f"/><rect x="1832.36" y="1461.25" width="29.75" height="49.00" fill="#3a6cea"/><rect x="1832.36" y="1510.25" width="29.75" height="18.40" fill="#ff2828"/><rect x="1869.81" y="1293.50" width="29.75" height="99.00" fill="#34c43a"/><rect x="1869.81" y="1392.50" width="29.75" height="64.50" fill="#fcdb3f"/><rect x="1869.81" y="1457.00" width="29.75" height="50.75" fill="#3a6cea"/><rect x="1869.81" y="1507.75" width="29.75" height="20.90" fill="#ff2828"/><rect x="1907.25" y="1318.75" width="29.75" height="92.00" fill="#34c43a"/><rect x="1907.25" y="1410.75" width="29.75" height="56.50" fill="#fcdb3f"/><rect x="1907.25" y="1467.25" width="29.75" height="45.25" fill="#3a6cea"/><rect x="1907.25" y="1512.50" width="29.75" height="16.15" fill="#ff2828"/><rect x="1944.70" y="1324.00" width="29.75" height="90.00" fill="#34c43a"/><rect x="1944.70" y="1414.00" width="29.75" height="55.00" fill="#fcdb3f"/><rect x="1944.70" y="1469.00" width="29.75" height="44.00" fill="#3a6cea"/><rect x="1944.70" y="1513.00" width="29.75" height="15.65" fill="#ff2828"/><rect x="1982.15" y="1317.75" width="29.75" height="96.00" fill="#34c43a"/><rect x="1982.15" y="1413.75" width="29.75" height="58.25" fill="#fcdb3f"/><rect x="1982.15" y="1472.00" width="29.75" height="42.00" fill="#3a6cea"/><rect x="1982.15" y="1514.00" width="29.75" height="14.65" fill="#ff2828"/><rect x="2019.59" y="1311.75" width="29.75" height="90.00" fill="#34c43a"/><rect x="2019.59" y="1401.75" width="29.75" height="59.75" fill="#fcdb3f"/><rect x="2019.59" y="1461.50" width="29.75" height="44.25" fill="#3a6cea"/><rect x="2019.59" y="1505.75" width="29.75" height="22.90" fill="#ff2828"/><rect x="2057.04" y="1318.75" width="29.75" height="92.75" fill="#34c43a"/><rect x="2057.04" y="1411.50" width="29.75" height="54.75" fill="#fcdb3f"/><rect x="2057.04" y="1466.25" width="29.75" height="45.50" fill="#3a6cea"/><rect x="2057.04" y="1511.75" width="29.75" height="16.90" fill="#ff2828"/><rect x="2094.48" y="1296.50" width="29.75" height="93.25" fill="#34c43a"/><rect x="2094.48" y="1389.75" width="29.75" height="69.25" fill="#fcdb3f"/><rect x="2094.48" y="1459.00" width="29.75" height="51.25" fill="#3a6cea"/><rect x="2094.48" y="1510.25" width="29.75" height="18.40" fill="#ff2828"/><rect x="2131.93" y="1288.25" width="29.75" height="97.50" fill="#34c43a"/><rect x="2131.93" y="1385.75" width="29.75" height="67.75" fill="#fcdb3f"/><rect x="2131.93" y="1453.50" width="29.75" height="56.25" fill="#3a6cea"/><rect x="2131.93" y="1509.75" width="29.75" height="18.90" fill="#ff2828"/><rect x="2169.38" y="1306.25" width="29.75" height="91.75" fill="#34c43a"/><rect x="2169.38" y="1398.00" width="29.75" height="61.50" fill="#fcdb3f"/><rect x="2169.38" y="1459.50" width="29.75" height="50.75" fill="#3a6cea"/><rect x="2169.38" y="1510.25" width="29.75" height="18.40" fill="#ff2828"/><rect x="2206.82" y="1273.75" width="29.75" height="102.25" fill="#34c43a"/><rect x="2206.82" y="1376.00" width="29.75" height="78.75" fill="#fcdb3f"/><rect x="2206.82" y="1454.75" width="29.75" height="56.50" fill="#3a6cea"/><rect x="2206.82" y="1511.25" width="29.75" height="17.40" fill="#ff2828"/><rect x="2244.27" y="1260.00" width="29.75" height="106.25" fill="#34c43a"/><rect x="2244.27" y="1366.25" width="29.75" height="85.50" fill="#fcdb3f"/><rect x="2244.27" y="1451.75" width="29.75" height="55.75" fill="#3a6cea"/><rect x="2244.27" y="1507.50" width="29.75" height="21.15" fill="#ff2828"/><rect x="2281.71" y="1268.75" width="29.75" height="107.50" fill="#34c43a"/><rect x="2281.71" y="1376.25" width="29.75" height="76.50" fill="#fcdb3f"/><rect x="2281.71" y="1452.75" width="29.75" height="57.25" fill="#3a6cea"/><rect x="2281.71" y="1510.00" width="29.75" height="18.65" fill="#ff2828"/><rect x="2319.16" y="1232.75" width="29.75" height="117.00" fill="#34c43a"/><rect x="2319.16" y="1349.75" width="29.75" height="91.00" fill="#fcdb3f"/><rect x="2319.16" y="1440.75" width="29.75" height="63.00" fill="#3a6cea"/><rect x="2319.16" y="1503.75" width="29.75" height="24.90" fill="#ff2828"/><rect x="2356.61" y="1286.00" width="29.75" height="106.75" fill="#34c43a"/><rect x="2356.61" y="1392.75" width="29.75" height="73.00" fill="#fcdb3f"/><rect x="2356.61" y="1465.75" width="29.75" height="49.25" fill="#3a6cea"/><rect x="2356.61" y="1515.00" width="29.75" height="13.65" fill="#ff2828"/><rect x="2394.05" y="1248.00" width="29.75" height="109.75" fill="#34c43a"/><rect x="2394.05" y="1357.75" width="29.75" height="92.50" fill="#fcdb3f"/><rect x="2394.05" y="1450.25" width="29.75" height="60.00" fill="#3a6cea"/><rect x="2394.05" y="1510.25" width="29.75" height="18.40" fill="#ff2828"/><rect x="2431.50" y="1238.00" width="29.75" height="102.75" fill="#34c43a"/><rect x="2431.50" y="1340.75" width="29.75" height="94.50" fill="#fcdb3f"/><rect x="2431.50" y="1435.25" width="29.75" height="65.25" fill="#3a6cea"/><rect x="2431.50" y="1500.50" width="29.75" height="28.15" fill="#ff2828"/><rect x="2468.94" y="1248.25" width="29.75" height="112.25" fill="#34c43a"/><rect x="2468.94" y="1360.50" width="29.75" height="89.75" fill="#fcdb3f"/><rect x="2468.94" y="1450.25" width="29.75" height="56.00" fill="#3a6cea"/><rect x="2468.94" y="1506.25" width="29.75" height="22.40" fill="#ff2828"/><rect x="2506.39" y="1247.75" width="29.75" height="106.50" fill="#34c43a"/><rect x="2506.39" y="1354.25" width="29.75" height="91.50" fill="#fcdb3f"/><rect x="2506.39" y="1445.75" width="29.75" height="62.00" fill="#3a6cea"/><rect x="2506.39" y="1507.75" width="29.75" height="20.90" fill="#ff2828"/><rect x="2543.84" y="1244.25" width="29.75" height="109.50" fill="#34c43a"/><rect x="2543.84" y="1353.75" width="29.75" height="92.00" fill="#fcdb3f"/><rect x="2543.84" y="1445.75" width="29.75" height="60.25" fill="#3a6cea"/><rect x="2543.84" y="1506.00" width="29.75" height="22.65" fill="#ff2828"/><rect x="2581.28" y="1237.75" width="29.75" height="111.00" fill="#34c43a"/><rect x="2581.28" y="1348.75" width="29.75" height="98.50" fill="#fcdb3f"/><rect x="2581.28" y="1447.25" width="29.75" height="58.00" fill="#3a6cea"/><rect x="2581.28" y="1505.25" width="29.75" height="23.40" fill="#ff2828"/><rect x="2618.73" y="1273.00" width="29.75" height="107.75" fill="#34c43a"/><rect x="2618.73" y="1380.75" width="29.75" height="87.25" fill="#fcdb3f"/><rect x="2618.73" y="1468.00" width="29.75" height="46.50" fill="#3a6cea"/><rect x="2618.73" y="1514.50" width="29.75" height="14.15" fill="#ff2828"/><g transform="translate(2526.40,1162.50) scale(0.4514,0.5068) translate(-4.1,-6.9)"><path d="M4.1,28.9h7.1l9.3-22l7.4,38l9.7-19.7l3,12.8h14.9M4.1,58h51.4" fill="none" stroke="#707070" stroke-width="1.5" vector-effect="non-scaling-stroke"/></g><g transform="translate(2568.70,1164.30) scale(0.4022,0.4304) translate(-3.1,-2)"><path d="M6.7,22.9h10V48h-10V22.9zM24.9,13h10v35h-10V13zM43.2,2h10v46h-10V2zM3.1,58h53.7" fill="none" stroke="#707070" stroke-width="1.5" vector-effect="non-scaling-stroke"/></g><g transform="translate(2609.00,1164.40) scale(0.4301,0.4270) translate(-2.1,-1.9)"><path d="M47,18.9h9.8V8.7 M56.3,20.1 C52.1,9,40.5,0.6,26.8,2.1C12.6,3.7,1.6,16.2,2.1,30.6 M13,41.1H3.1v10.2 M3.7,39.9c4.2,11.1,15.8,19.5,29.5,18 c14.2-1.6,25.2-14.1,24.7-28.5" fill="none" stroke="#707070" stroke-width="1.5" vector-effect="non-scaling-stroke"/></g><g transform="translate(2650.70,1165.10) scale(0.4192,0.4052) translate(-4.6,0)"><path d="M4.7,22.9L29.3,45.5L54.7,23.4M4.6,43.6L4.6,58L53.8,58L53.8,43.6M29.2,45.1L29.2,0" fill="none" stroke="#707070" stroke-width="1.5" vector-effect="non-scaling-stroke"/></g></svg>
</body></html>
